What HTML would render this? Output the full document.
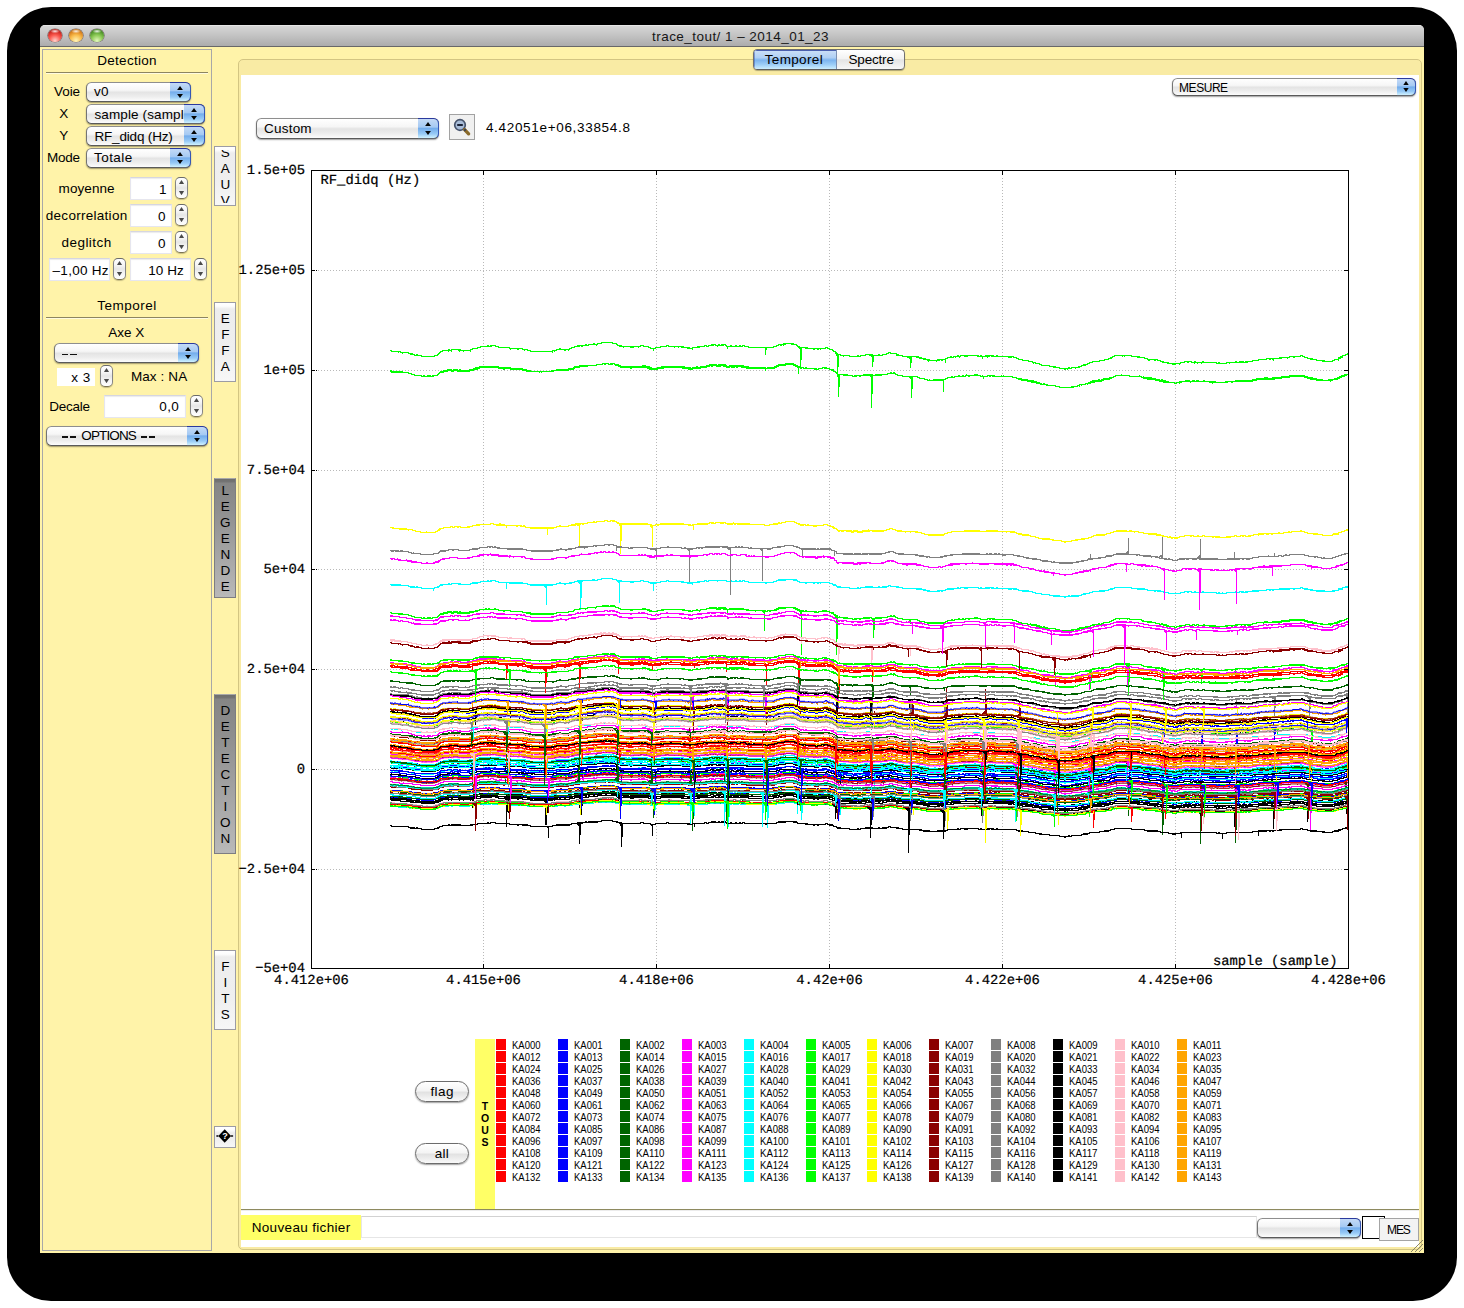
<!DOCTYPE html><html><head><meta charset="utf-8"><title>trace_tout</title><style>
*{box-sizing:border-box;margin:0;padding:0}
html,body{width:1464px;height:1308px;overflow:hidden;background:#fff}
body{position:relative;font-family:"Liberation Sans",sans-serif;font-size:13.5px;color:#000}
.abs{position:absolute}
#shadow{left:7px;top:7px;width:1450px;height:1294px;background:#000;border-radius:44px}
#win{left:40px;top:25px;width:1384px;height:1228px;background:linear-gradient(#cfcfcf 0,#cfcfcf 22px,#fff3a9 22px);border-radius:5px 5px 0 0;overflow:hidden}
#tbar{left:0;top:0;width:1384px;height:22px;background:linear-gradient(#d6d6d6 0%,#c4c4c4 45%,#acacac 100%);border-bottom:1px solid #686868;border-top:1px solid #e6e6e6}
.tl{width:14px;height:14px;border-radius:7px;top:4px}
.t{white-space:pre;line-height:16px;height:16px}
.cb{height:20px;border-radius:5.5px;background:linear-gradient(#ffffff 0%,#f6f6f6 40%,#e4e4e4 52%,#ededed 75%,#fcfcfc 100%);border:1px solid #747474;border-top-color:#8e8e8e;border-bottom-color:#5a5a5a;box-shadow:0 1px 1.5px rgba(0,0,0,.38)}
.cb .cap{position:absolute;right:-1px;top:-1px;bottom:-1px;width:21px;border-radius:0 5.5px 5.5px 0;border:1px solid #3557b6;border-left:none;border-top-color:#2b3a9e;border-bottom-color:#62666e;background:linear-gradient(#c4daf6 0%,#a6caf3 42%,#74adec 50%,#97caf6 78%,#d0f2ff 100%)}
.cb .cap:before,.cb .cap:after{content:"";position:absolute;left:50%;margin-left:-2.9px;width:5.8px;height:4px;background:#050505}
.cb .cap:before{top:3px;clip-path:polygon(50% 0,100% 100%,0 100%)}
.cb .cap:after{bottom:3px;clip-path:polygon(0 0,100% 0,50% 100%)}
.cb.sm .cap:before{top:2.1px;margin-left:-2.7px;width:5.4px;height:3.8px}
.cb.sm .cap:after{bottom:3.1px;margin-left:-2.7px;width:5.4px;height:3.8px}
.fld{background:#fff;border:1px solid #e6e6ee;border-top-color:#d6d6e0;box-shadow:inset 0 1px 1px rgba(0,0,0,.08)}
.stp{width:13px;height:22px;border-radius:5px;border:1px solid #858585;border-top-color:#6a6a6a;border-bottom-color:#7c7454;background:linear-gradient(#fff 0%,#f6f6f6 30%,#e6e6e6 50%,#f4f4f4 70%,#fff 100%);box-shadow:0 1px 1px rgba(0,0,0,.22)}
.stp:before,.stp:after{content:"";position:absolute;left:50%;margin-left:-2.6px;width:5.2px;height:4.2px;background:#4a4a4a}
.stp:before{top:1.9px;clip-path:polygon(50% 0,100% 100%,0 100%)}
.stp:after{bottom:2.8px;clip-path:polygon(0 0,100% 0,50% 100%)}
.vb{width:22px;border:1px solid #9c9ca4;background:linear-gradient(#ffffff 0,#fdfdfd 3px,#ededed 6px,#efefef 60%,#f7f7f7 100%);overflow:hidden}
.vbd{background:linear-gradient(#6e6e6e 0,#747474 3px,#858585 4px,#8e8e8e 25%,#b9b9b9 100%);border:1px solid #7d7d82;border-top-color:#a9a9a9}
.sep{height:2px;border-top:1px solid #8d8560;border-bottom:1px solid #fffbe0}
.pill{height:21px;border-radius:11px;border:1px solid #6c6c6c;background:linear-gradient(#fff 0%,#f4f4f4 45%,#e2e2e2 55%,#f9f9f9 100%);box-shadow:0 1px 1.5px rgba(0,0,0,.38)}
</style></head><body><div id="shadow" class="abs"></div><div id="win" class="abs"><div id="tbar" class="abs"></div><div class="abs tl" style="left:8.1px;top:3.9px;width:13.6px;height:13.6px;border-radius:7px;background:radial-gradient(ellipse 34% 16% at 50% 17%,rgba(255,255,255,.9) 0%,rgba(255,255,255,0) 100%),radial-gradient(circle at 50% 90%,#ffd2cc 0%,#fb5a50 42%,#d22d26 68%,#8a1a15 100%);box-shadow:0 0 0 .6px rgba(40,20,20,.55),0 1px 0 rgba(255,255,255,.35)"></div><div class="abs tl" style="left:29.1px;top:3.9px;width:13.6px;height:13.6px;border-radius:7px;background:radial-gradient(ellipse 34% 16% at 50% 17%,rgba(255,255,255,.9) 0%,rgba(255,255,255,0) 100%),radial-gradient(circle at 50% 90%,#fff5b8 0%,#f9bc4c 42%,#dc8622 68%,#9a5810 100%);box-shadow:0 0 0 .6px rgba(40,20,20,.55),0 1px 0 rgba(255,255,255,.35)"></div><div class="abs tl" style="left:50.2px;top:3.9px;width:13.6px;height:13.6px;border-radius:7px;background:radial-gradient(ellipse 34% 16% at 50% 17%,rgba(255,255,255,.9) 0%,rgba(255,255,255,0) 100%),radial-gradient(circle at 50% 90%,#e4f8bc 0%,#8cca56 42%,#559a2e 68%,#2f6216 100%);box-shadow:0 0 0 .6px rgba(40,20,20,.55),0 1px 0 rgba(255,255,255,.35)"></div><div class="abs t" style="left:612.05px;top:4.22px;font-size:13.5px;letter-spacing:0.454px;font-weight:normal;color:#161616">trace_tout/ 1 – 2014_01_23</div><div class="abs" style="left:2px;top:24px;width:170px;height:1202px;border:1px solid #a8a8a8"></div><div class="abs t" style="left:57.30px;top:27.72px;font-size:13.5px;letter-spacing:0.269px;font-weight:normal;">Detection</div><div class="abs sep" style="left:6px;top:47px;width:162px"></div><div class="abs t" style="left:14.00px;top:58.92px;font-size:13.5px;letter-spacing:-0.060px;font-weight:normal;">Voie</div><div class="abs cb" style="left:46px;top:57px;width:105px;height:20px"><span class="cap" style="width:21px"></span></div><div class="abs t" style="left:54.00px;top:59.42px;font-size:13.5px;letter-spacing:0.134px;font-weight:normal;">v0</div><div class="abs t" style="left:19.30px;top:80.82px;font-size:13.5px;letter-spacing:-1.016px;font-weight:normal;">X</div><div class="abs cb" style="left:46px;top:79px;width:119px;height:20px"><span class="cap" style="width:21px"></span></div><div class="abs t" style="left:54.40px;top:81.52px;font-size:13.5px;letter-spacing:0.127px;font-weight:normal;">sample (sampl</div><div class="abs t" style="left:19.30px;top:102.82px;font-size:13.5px;letter-spacing:-1.016px;font-weight:normal;">Y</div><div class="abs cb" style="left:46px;top:101px;width:119px;height:20px"><span class="cap" style="width:21px"></span></div><div class="abs t" style="left:54.40px;top:103.52px;font-size:13.5px;letter-spacing:-0.171px;font-weight:normal;">RF_didq (Hz)</div><div class="abs t" style="left:7.10px;top:124.82px;font-size:13.5px;letter-spacing:-0.260px;font-weight:normal;">Mode</div><div class="abs cb" style="left:46px;top:123px;width:105px;height:20px"><span class="cap" style="width:21px"></span></div><div class="abs t" style="left:54.00px;top:125.42px;font-size:13.5px;letter-spacing:0.454px;font-weight:normal;">Totale</div><div class="abs cb" style="left:144px;top:79px;width:21px;height:20px;border-radius:0 5.5px 5.5px 0;border-left:none;box-shadow:none;background:none"><span class="cap" style="width:21px"></span></div><div class="abs t" style="left:18.60px;top:155.52px;font-size:13.5px;letter-spacing:0.076px;font-weight:normal;">moyenne</div><div class="abs fld" style="left:90px;top:152px;width:42px;height:23px;"></div><div class="abs t" style="left:119.10px;top:156.52px;font-size:13.5px;letter-spacing:-1.316px;font-weight:normal;">1</div><div class="abs stp" style="left:135px;top:152px"></div><div class="abs t" style="left:5.80px;top:183.12px;font-size:13.5px;letter-spacing:0.279px;font-weight:normal;">decorrelation</div><div class="abs fld" style="left:90px;top:179px;width:42px;height:23px;"></div><div class="abs t" style="left:118.00px;top:183.52px;font-size:13.5px;letter-spacing:0.084px;font-weight:normal;">0</div><div class="abs stp" style="left:135px;top:179px"></div><div class="abs t" style="left:21.60px;top:210.02px;font-size:13.5px;letter-spacing:0.436px;font-weight:normal;">deglitch</div><div class="abs fld" style="left:90px;top:206px;width:42px;height:23px;"></div><div class="abs t" style="left:118.00px;top:210.52px;font-size:13.5px;letter-spacing:0.084px;font-weight:normal;">0</div><div class="abs stp" style="left:135px;top:206px"></div><div class="abs fld" style="left:9px;top:233px;width:61px;height:23px;"></div><div class="abs t" style="left:12.60px;top:237.52px;font-size:13.5px;letter-spacing:0.265px;font-weight:normal;">–1,00 Hz</div><div class="abs stp" style="left:73px;top:233px"></div><div class="abs fld" style="left:90px;top:233px;width:61px;height:23px;"></div><div class="abs t" style="left:108.20px;top:237.52px;font-size:13.5px;letter-spacing:0.105px;font-weight:normal;">10 Hz</div><div class="abs stp" style="left:154px;top:233px"></div><div class="abs t" style="left:57.25px;top:272.62px;font-size:13.5px;letter-spacing:0.481px;font-weight:normal;">Temporel</div><div class="abs sep" style="left:6px;top:292px;width:162px"></div><div class="abs t" style="left:68.20px;top:300.12px;font-size:13.5px;letter-spacing:0.042px;font-weight:normal;">Axe X</div><div class="abs cb" style="left:14px;top:318px;width:145px;height:20px"><span class="cap" style="width:21px"></span></div><div class="abs" style="left:22.3px;top:328.65px;width:6.2px;height:1.5px;background:#111"></div><div class="abs" style="left:30.4px;top:328.65px;width:6.2px;height:1.5px;background:#111"></div><div class="abs fld" style="left:17px;top:343px;width:38px;height:18px;border-color:#fff;box-shadow:none"></div><div class="abs t" style="left:31.20px;top:344.72px;font-size:13.5px;letter-spacing:0.492px;font-weight:normal;">x 3</div><div class="abs stp" style="left:60px;top:340px"></div><div class="abs t" style="left:90.90px;top:344.22px;font-size:13.5px;letter-spacing:0.112px;font-weight:normal;">Max : NA</div><div class="abs t" style="left:9.30px;top:373.92px;font-size:13.5px;letter-spacing:-0.266px;font-weight:normal;">Decale</div><div class="abs fld" style="left:64px;top:370px;width:82px;height:23px;"></div><div class="abs t" style="left:119.30px;top:374.22px;font-size:13.5px;letter-spacing:0.359px;font-weight:normal;">0,0</div><div class="abs stp" style="left:150px;top:370px"></div><div class="abs cb" style="left:6px;top:401px;width:162px;height:20px"><span class="cap" style="width:21px"></span></div><div class="abs" style="left:22.0px;top:411.35px;width:6.2px;height:1.5px;background:#111"></div><div class="abs" style="left:30.1px;top:411.35px;width:6.2px;height:1.5px;background:#111"></div><div class="abs t" style="left:41.30px;top:402.92px;font-size:13.5px;letter-spacing:-0.878px;font-weight:normal;">OPTIONS</div><div class="abs" style="left:101.0px;top:411.35px;width:6.2px;height:1.5px;background:#111"></div><div class="abs" style="left:109.1px;top:411.35px;width:6.2px;height:1.5px;background:#111"></div><div class="abs vb" style="left:174px;top:121px;height:60px"><div class="abs" style="left:0;top:3px;width:20px;height:53px;overflow:hidden"><div class="abs t" style="left:0;width:20.6px;text-align:center;top:-5.08px">S</div><div class="abs t" style="left:0;width:20.6px;text-align:center;top:10.82px">A</div><div class="abs t" style="left:0;width:20.6px;text-align:center;top:26.72px">U</div><div class="abs t" style="left:0;width:20.6px;text-align:center;top:42.62px">V</div></div></div><div class="abs vb" style="left:174px;top:277px;height:80px"><div class="abs" style="left:0;top:3px;width:20px;height:73px;overflow:hidden"><div class="abs t" style="left:0;width:20.6px;text-align:center;top:4.62px">E</div><div class="abs t" style="left:0;width:20.6px;text-align:center;top:20.62px">F</div><div class="abs t" style="left:0;width:20.6px;text-align:center;top:36.62px">F</div><div class="abs t" style="left:0;width:20.6px;text-align:center;top:52.62px">A</div></div></div><div class="abs vb vbd" style="left:174px;top:453px;height:120px"><div class="abs" style="left:0;top:3px;width:20px;height:113px;overflow:hidden"><div class="abs t" style="left:0;width:20.6px;text-align:center;top:0.82px">L</div><div class="abs t" style="left:0;width:20.6px;text-align:center;top:16.82px">E</div><div class="abs t" style="left:0;width:20.6px;text-align:center;top:32.82px">G</div><div class="abs t" style="left:0;width:20.6px;text-align:center;top:48.82px">E</div><div class="abs t" style="left:0;width:20.6px;text-align:center;top:64.82px">N</div><div class="abs t" style="left:0;width:20.6px;text-align:center;top:80.82px">D</div><div class="abs t" style="left:0;width:20.6px;text-align:center;top:96.82px">E</div></div></div><div class="abs vb vbd" style="left:174px;top:669px;height:160px"><div class="abs" style="left:0;top:3px;width:20px;height:153px;overflow:hidden"><div class="abs t" style="left:0;width:20.6px;text-align:center;top:5.12px">D</div><div class="abs t" style="left:0;width:20.6px;text-align:center;top:21.06px">E</div><div class="abs t" style="left:0;width:20.6px;text-align:center;top:37.00px">T</div><div class="abs t" style="left:0;width:20.6px;text-align:center;top:52.94px">E</div><div class="abs t" style="left:0;width:20.6px;text-align:center;top:68.88px">C</div><div class="abs t" style="left:0;width:20.6px;text-align:center;top:84.82px">T</div><div class="abs t" style="left:0;width:20.6px;text-align:center;top:100.76px">I</div><div class="abs t" style="left:0;width:20.6px;text-align:center;top:116.70px">O</div><div class="abs t" style="left:0;width:20.6px;text-align:center;top:132.64px">N</div></div></div><div class="abs vb" style="left:174px;top:925px;height:80px"><div class="abs" style="left:0;top:3px;width:20px;height:73px;overflow:hidden"><div class="abs t" style="left:0;width:20.6px;text-align:center;top:4.82px">F</div><div class="abs t" style="left:0;width:20.6px;text-align:center;top:20.82px">I</div><div class="abs t" style="left:0;width:20.6px;text-align:center;top:36.82px">T</div><div class="abs t" style="left:0;width:20.6px;text-align:center;top:52.82px">S</div></div></div><div class="abs vb" style="left:174px;top:1101px;height:22px"><svg width="20" height="20" viewBox="0 0 20 20"><path d="M9.7 2.3 L16.1 9 L9.7 15.7 L3.3 9Z" fill="#000"/><path d="M1.9 9h1M16.5 9h1" stroke="#000" stroke-width="1.5" stroke-linecap="round"/><text x="9.9" y="12.4" font-size="9" font-weight="bold" text-anchor="middle" fill="#fff" font-family="Liberation Sans">?</text></svg></div><div class="abs" style="left:198px;top:34px;width:1184px;height:1191px;border:1px solid #d3c582;border-radius:5px;background:#f9eba4"></div><div class="abs" id="white" style="left:201px;top:50px;width:1178px;height:1172px;background:#fff"></div><div class="abs" style="left:713px;top:24px;width:152px;height:21px;border-radius:4.5px;border:1px solid #707070;border-bottom-color:#5e5e5e;background:linear-gradient(#fff,#f3f3f3 45%,#e4e4e4 52%,#f7f7f7);box-shadow:0 1px 1px rgba(0,0,0,.3);overflow:hidden"><div class="abs" style="left:0;top:0;width:83px;height:19px;background:linear-gradient(#cde0f7 0%,#b0d0f4 40%,#7cb3ee 53%,#9ccdf7 76%,#ccedfe 100%);border-right:1px solid #7d90b2;box-shadow:inset 0 1px 0 #4a5fae, inset 1px 0 0 rgba(60,90,180,.5)"></div></div><div class="abs t" style="left:724.70px;top:27.12px;font-size:13.5px;letter-spacing:0.353px;font-weight:normal;">Temporel</div><div class="abs t" style="left:808.50px;top:27.12px;font-size:13.5px;letter-spacing:-0.189px;font-weight:normal;">Spectre</div><div class="abs cb sm" style="left:1132px;top:53px;width:244px;height:18px"><span class="cap" style="width:19px"></span></div><div class="abs t" style="left:1139.10px;top:55.04px;font-size:12px;letter-spacing:-0.469px;font-weight:normal;">MESURE</div><div class="abs cb" style="left:216px;top:93px;width:183px;height:21px"><span class="cap" style="width:21px"></span></div><div class="abs t" style="left:224.10px;top:96.12px;font-size:13.5px;letter-spacing:0.197px;font-weight:normal;">Custom</div><div class="abs" style="left:409px;top:89px;width:26px;height:26px;background:#f0f0f0;border:1px solid #a2a2a2"><svg width="24" height="24" viewBox="0 0 24 24"><circle cx="10" cy="10" r="5.3" fill="#a8bcd8" stroke="#46536c" stroke-width="1.7"/><path d="M7.2 10h5.6" stroke="#1a2238" stroke-width="1.8"/><path d="M14.6 14.6L18.6 18.8" stroke="#8a6a2a" stroke-width="3.4" stroke-linecap="round"/><path d="M14.4 14.4L15.6 15.6" stroke="#333d55" stroke-width="2.2"/></svg></div><div class="abs t" style="left:445.90px;top:95.12px;font-size:13.5px;letter-spacing:0.680px;font-weight:normal;">4.42051e+06,33854.8</div><svg class="abs" style="left:0;top:0" width="1384" height="1228" viewBox="40 25 1384 1228" shape-rendering="crispEdges"><defs><path id="b0" d="M390.5 0.5h1v1h7v1v-1h2v1h2v1v-1h6v1h2v1h1v-1h1v1h2v1h2v-1h1v1h1v-1v1h3v1h7v-1v1h6v-1v1v-1h3v-1h1v-1h1v-1h1v-1h2v-1h6v1v-1v-1h1v1h2v1v-1v-1h7v1h1v1v-1v-1h1v-1v1v1h3v1v-1h2v-1v1h5v1v-1v-1h2v-1h5v-1h3v-1h7v-1h1v1h2v-1v1v-1h1v1v-1h4v1h3v1h11v1h1v1v-1h7v1v-1v1h1v-1h4v1h2v1v-1h3v1h3v1h11v-1v1h11v1v-1v-1h2v1v-1h2v-1h3v-1h1v1h4v1h1v-1h3v1v-1h1v-1h2v-1h3v-1h3v-1h1v1h1v-1h2v-1v1v1h1v-1h3v-1h1v1h2v-1h4v-1v1h1v-1h1v1h2v1v-1h1v-1h4v-1h11v1h4v1h1v1h2v1h1v-1v1v-1h1v1h2v1v-1h7v1v-1v1h1v-1h1v1h1v-1h5v1v-1h2v-1v1v-1h3v1h3v-1v1h2v1h2v1h5v-1h5v-1h5v-1v1h1v-1h2v1h6v1v-1h4v1v-1h3v1h1v-1h1v1h4v1h1v-1h1v1v-1v1h3v-1h5v-1h1v1h1v-1v1v-1h5v-1h2v1h2v-1h3v-1h1v1h1v-1h2v1h2v1v-1h1v-1h1v1h2v-1h1v1h1v-1h2v1h1v1h1v1v-1h3v-1v1v-1h1v1h4v-1h1v1h3v-1h1v1h2v-1h2v1h4v1v-1v1h17v1h1v1v-1v-1h1v-1v1h6v-1h3v-1h2v-1v1v-1h2v1h1v-1h2v1v-1v-1h1v1h1v-1h5v-1v1h1v1v-1h1v1v-1h1v1h3v1h1v1h2v1h6v1h1v-1h1v1h6v1h1v-1h3v1h1v-1h2v1v-1h5v-1h2v1h2v1h3v1h1v1h2v1h1v1h1v1h3v1h3v1v-1h6v1h8v-1h1v1h2v-1h5v-1h7v1h2v-1v1h4v-1h1v1h3v-1h1v-1v1h3v-1h2v-1h2v1v-1v1h6v2h1v-1h1v1h4v1h5v1v-1h7v-1v1h2v1h1v-1h1v1h1v1h1v-1h1v1h2v1h1v-1h1v1h2v1h1v1v-1v-1h1v1v-1v1h7v1v-1h1v-1h1v1v-1v1h1v-1h2v1h1v-1h2v-1v1h1v-1h2v-1h3v-1h1v1h2v-1h2v1v-1h2v-1h1v1h1v1v-1h1v-1h4v1h1v-1h1v1h1v-1h10v1v-1h1v1h2v-1h1v1h4v-1h1v1h1v1v-1v-1h1v1h1v-1h2v-1v1v1h1v-1h1v1h1v-1v1h2v-1h1v1h11v1h1v-1h1v1h1v-1h2v1h3v1h2v1h4v1h6v1h4v1h1v1v-1h2v1h4v1h2v1h2v-1v1h6v1h1v-1v1h3v1h1v-1h1v1h4v1h5v1h1v-1h2v1v-1h1v-1h1v1h2v-1h4v1v-1h3v-1h1v1v-1h2v-1h1v-1v1h1v-1h1v1h1v-1h2v-1h2v-1h3v-1h7v-1h1v-1v1h4v-1h4v-1h2v-1h1v1v-1h1v-1h2v-1h8v1v-1h2v1v-1h1v-1v1h6v1h6v1h1v-1h1v1h5v1h3v1h1v1v-1h1v1v-1h3v-1v1h2v1h1v-1h2v1h3v1h2v1v-1h1v1h4v1v-1h1v1h4v1h1v-1v1v-1h1v1h1v-1h4v1v-1h1v-1h4v-1h3v1h1v-1h3v1h3v1v-1v-1h1v1h2v1v-1h4v1v-1h1v-1h1v1h13v1h2v-1h1v1h3v-1v1h4v-1h1v-1v1h2v1v-1h6v-1h1v-1v1v1h1v-1v1h2v-1v1v-1h1v1v-1h1v1h1v-1h1v1h2v-1h1v1h1v-1h5v-1h6v-1h1v-1v1h7v-1h3v1v-1v1h1v-1h2v1h1v1v-1v-1h6v-1h1v1h1v-1h6v1v-1h2v-1h4v1h1v-1h6v-1h2v1h2v1h3v1h3v1h1v-1h1v1h4v1h2v-1v1h4v1h1v-1h1v1h8v-1h2v-1h4v1v-1v-2h1v1h1v-2h1v1h1v-2h3v-1h2v-1h1" fill="none" stroke-linecap="square" stroke-linejoin="miter" vector-effect="non-scaling-stroke"/><path id="b1" d="M390.5 0.5h1v1h7v1h1v-1h1v1h1v-1h1v-1v1v1h6v1h3v1h2v-1v1h1v1h7v1h2v-1h1v1v-1v1h3v-1h1v1h1v-1h1v1h2v-1h1v1v-1h4v-1h1v-1h1v-1h1v-1h3v-1h4v-1h2v1v-1h2v1h2v-1h4v1h2v-1h1v1h9v-1h3v1v-1h1v-1h2v-1h1v1h1v-1h2v-1h6v-1h1v1h1v1v-1h1v-1h1v1h5v-1v1v-1h1v1h3v1h5v1h1v-1h1v1v-1h5v1h9v1v-1h3v1h1v1v-1h3v1h4v1h9v1v-1h2v1v-1h6v-1v1h4v-1h1v1h1v-1h3v-1h7v1v-1h5v-1h5v-1h1v-1h5v-1h6v1v-1h2v-1h8v1v-1h1v-1h6v-1h2v1h1v-1h2v1v-1h1v1h2v-1h1v1h1v-1h2v1h1v1h3v1h2v1v-1v1h10v1h1v-1h1v1v-1h10v-1h1v1h1v-1h1v1h2v1h1v-1v1v-1h1v2h1v-1h1v1h6v-1h4v-1h1v1h1v-1h19v1h1v-1h1v1h4v1h1v-1h1v1h2v-1h4v-1h1v1h2v1v-1h1v-1v1v-1h4v-1v1h2v-1h3v-1h2v1h1v-1h4v1h2v-1h1v1h1v1v-1v-1h3v1h1v-1h1v1h1v1h3v-1h1v-1v1h1v1h1v-1h1v1h1v-1h2v1h1v-1h1v1v-1h3v1h1v-1h1v1h3v1h1v-1h1v1h7v1v-1h8v1v-1h2v1h2v-1h2v1h1v-1h4v-1h2v-1h2v-1h7v-1h8v1h1v-1v1h1v1h2v1h2v1h1v1h1v-1h2v1v-1v1h2v-1h1v1h8v1h1v-1h1v1h2v-1h4v-1h2v1h1v-1h1v1h3v1h2v1h1v-1h1v2h2v1h1v1h1v1h2v-1v1h4v1h1v-1h1v1h1v-1h1v1h5v1h2v-1h1v1h1v-1h3v1h1v-1h3v-1h1v1h1v-1h1v1h1v-1h1v1h1v-1h2v1h4v-1h1v1h1v-1h1v1v-1v1h1v-1h1v1h1v-1h6v-1h3v-1h1v1h2v1v-1v-1h1v1h1v1v-1v1h2v1h5v1h7v1h1v-1h2v1v-1h5v1v-1v1h2v1h5v1h3v1h2v-1v1h4v-1v1h4v-1h1v1h1v1v-1h2v-1h1v1h1v-1h2v-1h2v-1h4v-1h1v1h2v-1h4v-1h1v1h3v-1h1v1h2v-1h1v-1v1h2v1h1v-1h3v1v-1h2v-1h1v1h1v-1h1v1h3v1h2v-1v1h5v-1h2v1h1v-1h2v1h1v-1h1v1h7v-1v1h2v-1v1h9v1v-1v1h4v1h2v1h3v1h6v1h1v1v-1h2v-1v1h1v1h1v-1v1v-1h1v1h1v1v-1h2v1h3v1h1v1v-1h1v1h1v-1v1h1v-1h1v1h2v1v-1h1v1h8v1h2v-1v1h2v1h12v-1h1v1h1v-1h2v-1v1h2v-1h2v1v-1v-1h2v1v-1h4v-1h2v1v-1h1v-1h2v-1h2v-1h1v1h1v-1h4v-1h1v1h2v-1h1v1v-1h1v-1h2v1v-1h4v-1h2v-1h2v-1h2v-1h4v1v-1h2v-1v1h6v1v-1h2v1h10v-1v1h2v1v-1v1h1v1v-1h1v-1v1v1h4v1h1v-1h1v1h1v-1h1v1h4v1h4v1h2v-1h1v1h1v1h1v-1h1v-1v1v1h1v-1v1v1h1v-1h1v1v-1v1h6v1h2v-1h3v1v-1v-1h1v1h1v-1h4v-1h4v1h1v1v-1h2v-1h2v1h2v-1h2v1h5v-1h1v1h4v-1v1h1v-1v1v1h1v-1v1v-1h1v1h1v1v-1v-1h1v1h1v-1h1v-1v1v1h10v-1h1v1h1v-1h4v1h1v-1h3v-1h1v1h1v-1h4v1v-1h2v-1v1h1v1h1v-1h2v1h1v-1h1v1h1v-1h2v-1h2v-1v1h2v-1h2v-1v1h5v1v-1h1v-1h1v1h1v-1h1v1h5v-1h1v1h1v-1h7v-1h8v-1h2v1v-1h9v-1v1h1v-1h1v1h2v1v-1v1h3v1h3v1h1v-1h1v1h4v1h4v1h1v-1h1v1h6v-1h1v1h1v1v-1v-1h1v1h1v-1h2v-1h3v-1h1v-1v1h1v-1h2v-1h1v1v-1h2v-1h2v-1h2" fill="none" stroke-linecap="square" stroke-linejoin="miter" vector-effect="non-scaling-stroke"/><path id="b2" d="M390.5 0.5h2v1h1v-1v1h6v1h4v-1v1h3v1h2v1v-1h4v1h3v1h5v1h6v-1v1h7v1v-1h2v-1h2v-1h1v1v-1v-1h1v1v-1v-1h1v-1h3v-1h7v-1h2v1h2v-1h3v1h1v-1h2v1h7v-1h1v1h1v-1v1v-1h3v-1h4v-1v1v-1h3v-1h9v1v-1h2v-1h3v1h3v1h3v-1h1v1h1v-1v1h3v1h5v-1v1h7v1h1v-1h2v-1v1h1v1v-1h1v1h2v-1h1v1h1v1h3v-1v1h2v1h9v1v-1h5v1v-1h7v-1h1v1h1v-1h3v-1h3v-1h1v1h3v-1v1h2v-1v1h3v-1h3v-1h4v-1h2v-1h1v1h2v-1v1v-1h2v1h1v-1h4v-1h6v-1h1v1h1v1v-1h1v-1h8v-1h3v1h2v-1v1h1v-1h2v1h1v-1h1v1h2v1h1v1h2v1h11v1h1v-1h4v-1v1h3v-1h1v1h2v-1h1v1h1v-1h1v1h3v1h2v-1v1h2v1h4v-1h2v1h1v-1h2v-1h6v-1h1v1h12v1h1v-1h1v1v-1h1v1v-1h1v1h5v1h1v-1h1v1h2v-1h5v-1h1v1h1v-1h1v1h1v-1h6v-1h2v-1h2v1h1v-1h1v1h2v-1h1v1v-1h3v1v-1h1v1h1v-1v1v-1h1v1h1v-1h2v1h2v2h1v-1h2v-1h1v1h1v1v-1v-1h1v-1v1h1v1h1v-1h2v1h3v-1h1v1h1v-1h1v1h5v-1v1h1v1h1v-1v1h14v1h5v-1h4v-1h4v-1h1v-1h1v1h2v-1h4v-1h9v-1v1v1h2v1h2v1v-1v1h1v1h1v1h1v-1v1v-1h1v1h1v-1h2v1h2v1v-1v-1h1v1h5v1h1v-1h1v1h1v-1h2v1v-1h5v-1h3v-1v1h1v1h1v-1v1h2v1h2v1h1v1h1v1h2v1h1v1h1v1h1v-1h2v1h1v-1v1h1v-1h3v1h5v1h1v1v-1h1v-1h4v1h5v-1h1v1v-1h2v-1h1v1h1v-1h1v-1v1v1h1v-1h3v1h8v-1h1v1h2v-1h3v-1h1v1v-1h2v-1h3v1h3v1h2v1h4v1h4v1v-1h1v-1v1h2v-1v1h1v-1v1h1v1v-1h5v1h1v-1h1v1v-1v1h4v1h1v1v-1h2v1h1v1v-1h3v1h7v1v-1h6v-1v1h2v-1h1v-1v1v-1h3v-1h4v-1h1v-1v1h12v-1h13v1v-1h2v1h7v-1h5v1h1v-1h1v1h1v-1h1v1h1v-1h1v1h9v1v-1h4v1h1v-1h1v1h1v-1h1v1h2v1v-1v1h2v1v-1v1h1v-1h1v1h1v-1v1h1v1h6v1h2v-1v1v1h5v1h3v1v-1v1h4v1h1v-1h1v1h3v1h1v-1h1v1h3v1v-1h1v1h8v1v-1v1h1v1v-1h2v1h1v-1h6v-1h4v-1h1v1h1v-1h4v-1h3v-1h4v-1h3v-1h2v-1h3v-1h1v1h1v-1h3v1v-1h1v-1h1v1h1v1v-1v-1h2v-1h4v-1h1v-1v1h2v-1h3v-1v1v-1h4v-1v1h2v1v-1h1v1v-1h3v1h3v-1h2v1h3v1v-1h4v1h5v1h5v1h2v1v-1h6v1v-1v1h4v1h2v1v-1h1v1h4v1h2v-1h1v1h1v1h1v-1h1v1v-1h1v1v-1v1h3v-1h2v-1h5v-1h3v-1v1h3v1h1v-1h2v1h4v-1v1v-1h1v1h4v-1h2v1h5v1v-1h2v-1v1h1v1h1v-1h2v1h1v-1h1v1h1v-1h1v1h7v-1h1v1h1v-1h1v1h1v-1v1v-1h4v-1h2v1h4v-1h2v-1v1v1h1v1v-1v-1h2v1h1v1v-1h2v-1h1v1h1v-1h1v1v-1h2v-1h2v-1v1h3v1v-1v-1h5v-1h3v1h2v-1h3v1h1v-1h6v-1h1v1h4v-1h5v1v-1v-1h1v1h2v-1v1v-1h2v1v-1h1v1v-1h6v-1h1v1h3v1h3v1v-1v1h2v1v-1h1v1v-1h3v1h2v-1v1h2v1h5v1h7v1v-1h3v-1h1v-1h3v-1h1v1h1v-2h1v1v-1h2v-1h3v-1h2v-1v1v-1h2" fill="none" stroke-linecap="square" stroke-linejoin="miter" vector-effect="non-scaling-stroke"/><path id="b3" d="M390.5 0.5h1v1h2v-1h2v1h3v1h2v-1h2v1h2v-1v1h4v1h3v1h2v-1v1h1v1h3v-1v1h3v1h13v-1h3v-1h1v1v-1h1v-1h1v-1h1v-1h1v-1v1h1v-1h1v1h2v-1h3v-1v1v-1h4v1h1v-1h4v-1v1h1v1h7v-1v1h4v-1h1v-1v1h2v-1v1v-1h5v1v-1v-1h2v-1h7v1v-1h1v-1h2v1h1v-1h2v1h2v-1h1v-1v1v1h1v1v-1h1v1h1v-1h1v1h8v1h2v-1h1v1h5v1h1v-1h1v-1v1h5v1h4v1h5v1h4v1v-1h16v-1v1h1v-1h4v1v-1v-1h1v1h1v1v-1v-1h2v-1h1v1h2v1v-1h2v1h1v-1v1v-1h1v1v-1h1v-1h3v-1h4v-1h1v-1v1h2v-1h2v1v-1h7v-1v1v-1h6v-1h2v1h1v-1h8v-1h4v1h1v-1h4v1h3v1h1v1h2v1h1v-1h1v1v-1v1h6v1v-1h1v1h2v-1h1v1h1v-1h10v1v-1h1v1v-1h4v1h3v1v-1v1h4v1v-1h1v-1h1v1v-1h4v-1h3v1v-1h3v-1v1h1v-1h1v1h13v1h3v-1h1v1h3v-1v1h1v1h1v-1h1v1h1v-1h2v1v-1h2v-1h2v1h1v-1h1v-1v1h1v1h1v-1h3v-1h1v-1v1v1h1v-1h3v-1h1v1h3v-1h1v1h1v1v-1h1v-1h1v1h1v-1h1v-1v1h2v1h2v-1h1v1h2v2h1v-1h2v1v-1h5v-1h1v1h1v1v-1h1v-1h1v1h2v-1v1v-1h1v1h2v1v-1h4v1h2v-1h1v1h15v-1v1h1v1h1v-1h1v1h1v-1h2v-1h1v1v-1h1v1v-1h3v-1h3v-1h3v-1v1h1v-1h5v-1v1h3v1v-1h1v1h3v1h1v1h2v1v-1v1h2v1v-1h1v1h2v-1h1v1h1v-1v1h5v1v-1h4v1h2v-1h1v1h2v-1h1v1v-1h3v-1h1v1h1v-1v1v-1h1v1h3v1h1v1h3v1h1v1h1v2h2v1v-1h1v1v-1h4v1h9v1h2v-1h1v1h1v-1h2v1h1v-1h1v1h2v-1h1v1v-1h2v-1h1v1h1v-1h2v1h1v-1h1v1h6v1v-1h2v-1h1v1h1v-1h4v-1h3v-1h1v1v-1h3v-1v1h1v1h2v1h3v1h3v1h1v-1h1v1v-1v1h11v1v-1h1v1h1v1v-1v-1h1v1h2v1h4v1v-1v1h1v-1v1h2v1h1v-1h1v1v-1h1v1h9v-1v1h2v-1h1v1h1v-1h1v-1v1h1v-1h1v1h1v-2h4v-1h1v1h1v-1h10v-1v1v-1h17v1h6v-1v1h1v-1h1v1h2v-1h2v1h3v-1h1v-1v1h1v1h2v-1v1v-1h1v1h3v1h1v-1h1v1h1v-1h1v1v-1h1v-1v1h2v1v-1h4v1h4v1h2v1v-1v1h1v-1v1h1v-1v1h2v1h3v1h1v-1h1v1h4v1h4v1h3v-1v1h1v1v-1v1h2v1h5v1h4v1h2v-1h1v1h5v1h1v-1h1v1h3v1h1v-1h3v-1h1v-1v1v1h3v-1v1v-1h3v-1v1h1v-1h1v1h1v-1h3v-1h2v-1h4v-1h1v-1h1v1h1v-1h2v-1h6v-1h1v1h1v-1h5v-1h1v-1h5v-1h2v-1h3v-1h1v-1v1h4v-1v1h4v1h3v1v-1h8v1h1v1v-1v-1h2v1h4v1h6v1v-1h1v1h1v1v-1h4v1h1v-1h1v1h2v1h5v1h2v1v-1v1h2v-1h1v1h3v1h5v-1h2v-1h1v1h1v-1h3v1v-1v-1h2v1h2v-1h4v1h4v-1h3v1h14v1h1v-1h1v1h1v-1h1v1v-1v1h10v-1v1v-1h1v1h1v-1h2v1h1v-1h7v-1h3v1h1v-1h3v1h3v-1h3v-1h6v-1h5v-1h1v1h1v-1h1v1h1v-1h1v-1v1h1v1h1v-1h8v-1h3v1h2v-1h2v-1h1v1h3v-1h1v1v-1h7v1v-1h7v1h1v1v-1h3v1h2v1h4v1h1v-1h2v1h4v1h2v-1h1v1h3v1v-1h5v-1h3v-1h2v-1h1v-1h1v-1v1h2v-1v1v-1h3v-1h1v-1h1v-1v1h2v-1v1" fill="none" stroke-linecap="square" stroke-linejoin="miter" vector-effect="non-scaling-stroke"/><path id="b4" d="M390.5 0.5h1v1h1v-1h2v1h3v-1v1h1v1h1v-1h1v1h1v1v-1h5v-1v1h1v1h4v1h5v1h3v-1v1h2v1h5v1v-1v-1h1v1h1v-1v1h5v-1h1v1v-1h1v-1h1v1v-1h2v-1h1v-1h1v-1h2v-1h1v1h1v-1h5v-1h3v1v-1h5v1h10v-1h1v1h1v-1h3v-1h5v-1h2v-1h1v-1v1h3v-1v1v-1h4v1h1v1v-1v-1h2v-1v1h1v1h1v-1h1v1h1v-1h1v1h2v1v-1h1v1v-1v1h3v1v-1h3v1v-1h3v1h2v1v-1v-1h1v1h1v-1v1h2v1v-1h8v1h1v-1h2v1h1v1h3v1v-1h2v1v-1v1h1v-1v1v-1h1v1v-1v1h7v1v-1h12v-1h1v1h1v-1h3v-1h9v1h1v-1h2v-1h3v-1h3v-1h4v1v-1h1v-1h2v-1v1h1v1v-1h1v1v-1h5v-1h1v1h1v-1h4v-1h2v1h1v-1h3v-1h1v1h2v-1h2v1h1v-1v1h2v-1h1v1h1v-1v1h2v-1h1v1h3v1h2v1h1v1h2v1v-1h2v1v-1h8v1v-1h7v-1h1v1h2v-1h1v1h2v-1h1v1h1v1v-1h1v1h2v1h1v-1h1v1h3v-1h6v-1h1v1h2v-1v1v-1h3v-1v1h1v-1v1h2v1v-1h1v-1h1v1h1v-1v1h2v1v-1h6v1v-1v1h1v1v-1h2v-1h1v1h2v-1v1h3v1h1v-1h4v1v-1h3v-1h6v-1h3v1v-1v1h1v-1h2v-1h3v1h2v-1h2v1h1v-1h1v-1v1h1v1h2v-1h1v1v-1h3v1h1v-1v1h1v1h3v-1h1v1h1v-1h4v1h1v1v-1h3v-1h5v1h1v-1v1v1h2v-1h1v1h2v-1v1h2v-1h1v1h2v1v-1h4v1v-1h5v1h3v-1h3v1v-1h3v1v-1v-1h3v-1h3v-1h4v-1h1v-1v1h5v1v-1h4v1h2v1h1v1h2v1h3v1v-1v1h1v-1h2v1h1v1v-1h9v1h2v-1h4v-1h2v-1v1v1h1v-1h3v1h3v1h3v1h1v2h2v2h1v1h1v1v-1v-1h4v1h2v-1h1v1h3v-1v1h3v-1v1h1v1v-1h1v1h4v1v-1v-1h2v1h1v-1h6v1v-1v-1h3v1h1v-1v1h11v-1v1v-1h1v1h1v1v-1v-1h2v-1h2v-1h1v1h1v-1h1v1v-1h1v1h1v-1h1v1h2v1h2v1v-1v1h5v1h4v1h1v-1h2v1v-1h7v1h4v1h3v1h4v-1v1h1v1v-1v1h2v1v-1h8v-1h2v1h2v-1h3v-1h3v-1h2v-1h1v1h1v1v-1v-1h6v-1v1h1v-1h6v1h1v-1h6v-1v1h7v1h3v1v-1h6v-1h6v1h8v1v-1h4v1v-1v1h1v-1h3v1h1v-1h2v1h2v-1v1h1v1h3v1h2v1v-1v1h7v1h2v1h1v-1h2v1h2v1h4v1v-1v1h2v1h2v-1h1v1h1v1h1v-1h2v1h3v1v-1h1v1h1v-1h1v1h4v1v-1h1v1h5v1h1v-1h7v-1h3v-1h1v1h1v-1h2v-1h1v1v-1v1h1v-1h2v-1h5v1v-1v-1h1v1v-1h1v-1h2v1v-1v-1h1v1h1v-1h4v-1h8v-1h2v-1h2v-1h1v1v-1h2v-1h1v-1h1v1h1v1v-1v-1h3v1v-1h8v1h1v1v-1h1v1v-1h1v-1h3v1h4v1h1v-1h1v1h2v1h1v-1h2v1v-1h1v1h4v1h2v-1v1v-1h1v1h5v1v-1v1h3v1v-1v1h1v1v-1h3v1h4v1h4v1h1v-1v1v-1h1v1h2v-1h5v1v-1v-1h1v-1h3v1h1v-1h2v1h1v-1h1v1h1v-1h4v1h3v-1h3v-1v1v1h9v1h1v-1h1v1h2v-1h2v1h1v1v-1v-1h1v1h5v-1v1h6v-1h2v1h1v-1h3v-1h1v1h1v-1h1v1h1v-1h4v1h1v-1h2v1v-1h1v1v-1h2v1h1v-1h2v-1h1v1v-1h5v-1v1v-1h1v1v-1h4v-1h1v1h5v-1h1v1h1v-1h6v-1h1v1h1v-1h1v1h1v-1h9v-1h7v1v-1h8v1h1v1v-1h1v1v-1v1h2v1v-1h2v1h2v-1v1h2v1h1v-1h1v1h4v1h10v-1h4v-1h1v-1h2v-1v1v-1h2v-1h1v1h1v-1h2v-1h2v-1h2v1v-1" fill="none" stroke-linecap="square" stroke-linejoin="miter" vector-effect="non-scaling-stroke"/><path id="b5" d="M390.5 0.5h1v-1v1v1h1v-1v1h1v1v-1v-1h1v1h3v-1v1h1v1v-1v1h1v-1h1v1h1v1v-1h4v1v-1h1v1h3v1h1v-1h1v1h2v1v-1h2v1h4v1h3v1v-1h6v1v-1h7v-1h2v-1h1v-1h1v-1h1v-1h2v-1h5v-1v1h1v-1h3v1h1v-1h6v1v-1h1v1h10v-1h3v-1h4v-1h4v-1v1h1v-1h9v-1h1v1v-1h1v1h5v1v-1v1h2v1v-1h7v1h1v-1h1v-1v1h1v1v-1h1v1h3v1v-1h5v1h1v1v-1v-1h1v-1v1h1v1h1v-1h1v1h4v1h1v-1v1h3v1h1v-1h2v1h5v1v-1h3v-1v1h4v1v-1h6v1v-1h1v-1h4v-1h7v1h1v-1h4v-1h3v-1h2v-1h2v1v-1h1v-1h1v1h2v-1h6v-1h2v1h1v-1v1v-1h4v-1h6v-1h1v1h1v-1v1v-1h4v1h1v-1h3v-1v1h2v1h2v-1h1v1h1v1h3v1h2v1h1v-1h2v1h3v1h1v-1h1v1h2v-1h3v1v-1h7v-1h1v1h6v1h1v-1h1v1h1v1h6v1v-1v-1h5v-1h2v-1v1h6v-1h1v1h1v1v-1h3v1v-1h4v1h1v-1h1v1v-1v1h1v-1h3v1h1v1v-1h2v1h1v1v-1v-1h1v1h1v1v-1h1v-1h5v-1h9v-1h1v1h1v-1h2v1v-1h1v-1h2v1v-1h1v1h3v-1h1v-1v1v1h1v-1h1v1v-1v1h1v1v-1v-1h3v1h3v1h1v1h1v-1h2v1v-1h1v-1h2v1h1v-1v1h2v-1h1v1h1v-1h2v1h2v-1h1v1h5v1h3v-1h1v1h12v1h1v1v-1h1v-1h1v1v-1v1h1v-1h4v-1h1v1h1v-1h2v-1h3v-1h5v-1h10v1h2v1h2v1h1v1h4v1h1v-1h3v1h4v1h1v-1h4v1h1v1v-1v-1h6v-1v1h3v-1h2v1v-1v1h3v1h1v-1v1v1h2v1h1v1h1v1h1v1h2v1v-1h2v1h2v-1h1v1h1v1v-1h4v1h1v-1v1v-1h1v1h1v-1h1v1h1v-1h1v1h1v-1h2v1h1v-1h1v1h1v-1h4v-1h1v1v-1h2v1h2v-1h1v1h5v1v-1v-1h1v1v-1v1h2v-1h1v1v-1h2v1h1v-1h2v-1h2v-1h1v1h1v-1h2v1h4v1h2v1h4v1v-1h1v1h3v1v-1h1v1h1v-1h8v1h1v-1h1v1h2v-1v1v1h4v1h1v-1h1v1h1v1v-1h1v1h7v1v-1h9v-1h1v-1v1h1v-1h2v-1h4v-1h1v1v-1v1h1v-1h1v-1v1h1v1v-1h3v-1h1v1h1v-1h4v1v-1h11v-1h1v1h1v1v-1h1v1h9v-1h6v1h1v-1h1v1h9v1h1v-1h6v-1v1h2v1h2v1h2v1h1v-1h1v1h2v1v-1v1h1v-1h2v1h1v1h1v-1h1v1h6v1h1v1h1v-1h1v1h2v1h4v1h6v1h1v-1h1v1h2v1v-1h1v1h1v-1h1v1h4v1h3v1v-1h2v1h1v-1h4v-1h2v1h1v-1h3v-1h1v-1v1v1h2v-1h2v1v-1h1v-1h2v-1h4v-1h2v1v-1v-1h4v-1h4v-1h1v1h1v-1h1v1h1v-1h2v1v-1v-1h6v-1h1v-1h4v-1v1v-2h3v1v-1h1v1v-1h11v1h1v-1h1v1h8v1h1v-1v1h3v1h6v1h7v1h1v-1h1v1h2v1h3v1h6v1h3v1v-1h1v1h3v1v-1v-1h3v-1h1v1h1v-1h2v1v-1v-1h1v1v-1h6v1h2v-1h2v1h1v-1h1v1h2v-1h1v1h1v-1h1v1h1v-1v1v-1h1v1h4v1v-1h3v-1v1h4v1h11v-1h3v1v-1v1h1v1v-1v-1h2v1v-1h3v-1v1h3v-1h1v1h1v-1h1v1h2v-1h4v-1v1v1h2v-1h4v-1h2v1v-1h4v-1h4v-1h1v1h1v-1h1v-1v1v1h2v-1h4v1h1v-1h1v-1v1h5v1v-1h2v-1h10v1v-1v-1h1v-1v1v1h1v-1h2v-1v1h4v-1h1v1h1v-1h2v1h1v1h3v1h6v1v-1v1h4v1h2v1v-1h3v-1v1h1v1h1v-1h1v1h1v1v-1h7v-1v1v-1h2v-1h3v-1h2v-1h1v-1h3v-1h3v-1h2" fill="none" stroke-linecap="square" stroke-linejoin="miter" vector-effect="non-scaling-stroke"/><path id="b6" d="M390.5 0.5v1h1v-1h1v1h1v1v-1h1v-1h1v1h3v1h1v-1h1v-1v1v1h6v1v-1h2v-1v1v1h3v1h1v1v-1h3v1h1v-1h1v1h2v-1v1h1v1h7v1v-1h2v-1v1h4v-1h1v-1v1v1h1v-1h2v-1h1v-1h1v-1h1v-1h2v-1v1v-1h3v1v-1h3v-1h1v1v-1h1v1h1v-1h6v-1v1v1h11v1v-1v-1h1v1h1v1v-1v-1h2v-1h2v-1v1h2v-1h3v-1h2v-1v1v1h1v-1h2v-1h1v1h1v-1h2v1v-1v1h9v1h1v-1h1v1h8v1h1v-1h1v1v-1v1h1v1v-1h8v1h1v-1h2v1v-1v1h1v-1h1v1h2v1h4v1h4v-1h1v1h3v1v-1h4v1v-1h6v1v-1h3v-1h2v1h2v-1h2v-1h4v-1h1v1h4v1h1v-1h3v-1h2v-1h5v-1h1v-1h2v1h1v-1h1v1h1v-1h4v-1h6v-1h10v-1h4v1v-1h5v1h1v-1h1v1h2v1h2v1h3v1h1v-1h1v1h3v1v-1h1v1v-1h15v-1h2v1h4v1h4v1h4v-1h1v1h1v-1h4v-1h7v-1h1v1h4v1v-1h5v1v-1h4v1h5v1h1v-1h2v1h2v-1v1h1v-1h4v-1h1v1v-1v1h1v-1h6v1v-1v-1h2v-1v1v1h1v-1h1v-1v1h2v-1h3v1v-1h1v1h4v-1h1v1v-1h1v1h1v1v-1v-1h1v-1v1h1v1h2v1h2v1v-1h11v-1h3v1v-1h2v1h1v1v-1h2v1h1v1v-1h3v-1h2v1h6v1v-1h7v1h1v-1h6v1v-1h1v-1h2v-1h3v-1h4v-1h7v-1v1h3v1v-1h1v1h1v1v-1h1v1h2v1h1v1h1v1h1v-1h1v1h1v-1h1v1h4v-1v1h3v1h1v-1h1v1h1v-1h2v1h1v-1h5v1v-1h2v-1h1v-1v1h1v-1v1h1v1v-1v1h1v1v-1h1v1h4v1v-1v2h1v1h1v1h2v1h1v1h2v-1v1v-1h3v1h1v1v-1h1v-1h1v1h5v1h1v-1h1v1h3v-1h1v1h3v-1h5v1v-1v-1h2v1h10v-1h1v1h1v-1h1v1h2v-1h1v1h1v-1h3v-1h1v-1h5v1h2v1h2v1h2v1v-1h2v1h3v-1v1h2v1v-1h1v1v-1h4v-1v1h4v1h1v-1h1v1h4v1v-1v1h1v1h1v-1h1v1h2v1h10v1v-1h6v-1v1h1v-1h2v-1h1v-1h3v1v-1h1v-1h1v1h2v-1h7v-1h5v1v-1h1v-1v1h2v1h1v-1h2v1v-1h1v-1v1h4v-1h1v1h2v1h8v-1h1v1h1v1v-1v-1h2v-1v1h1v1h1v-1h2v1h3v1v-1h10v1h1v-1h3v1h3v1v-1h2v1h2v1h2v1h1v-1h1v1v-1v1h4v-1v1v1h5v1h4v1h3v1h3v1h4v1h3v-1v1h2v1h2v-1h1v1h6v1h7v-1v1h2v-1h1v1h2v-1h4v-1h5v-1h2v1v-1h2v-1h1v-1h1v1v-1h1v1v-1h2v-1h2v-1h5v1v-1v-1h1v1h1v-1h1v1h1v-1h4v-1h2v-1h1v1h1v-1h1v1v-1h1v-1h1v-1h2v-1h6v1v-1h6v1h1v-1h2v1h1v-1h2v1h1v-1v1h2v-1v1h4v1h3v1h1v-1v1v-1h1v-1v1h1v1h1v-1v1h4v1h5v1h1v-1h1v-1v1v1h2v1h3v1v-1h2v1h4v1h3v1v-1h1v1h3v1v-1h1v-1h2v1v-1h3v-1h2v-1v1v-1h1v-1v1h4v1v-1h3v1h1v-1h2v1h1v1v-1v-1h3v1v-1h1v1h1v-1h1v1v-1v1h1v1v-1v-1h1v1v-1v1h8v1h1v-1h3v1h1v-1h1v1h2v-1v1v-1h1v1h2v1v-1h1v1v-1h1v-1v1h1v-1h1v1h1v-1h1v1h3v-1h4v-1h1v1h1v1v-1v-1h1v1h2v-1h1v-1v1v1h2v-1h2v1h1v-1h2v1h1v-1h1v-1v1h2v1v-1h2v-1h3v1v-1v-1h1v1h1v1v-1v-1h2v-1v1h4v-1h1v1h2v-1h5v-1v1h1v-1v1h6v-1h1v1h2v-1h9v-1h7v-1h2v1h1v1v-1h1v1h4v1h1v1v-1h1v1h8v1h2v-1v1h1v1v-1v1h1v-1h1v1h3v-1h1v1v-1v1h1v-1h1v1h4v-1h1v-1h3v-1h2v-1h4v-1h2v-1h1v-1v1h1v-1h1v-1h1" fill="none" stroke-linecap="square" stroke-linejoin="miter" vector-effect="non-scaling-stroke"/><path id="b7" d="M390.5 0.5h1v1h4v-1v1h1v1h2v-1h1v1h1v-1v1h6v1h2v1v-1h4v1h3v1v-1h1v1h6v1h12v1v-1h1v-1h1v-1v1h1v-1h1v-1h1v-1h2v-1h2v-1h5v-1h1v-1v1v1h1v-1h1v1h2v-1h6v1h3v1v-1h7v-1h5v-1h2v-1h2v-1h2v1v-1h4v-1h2v1v-1v1h3v1v-1h1v-1h1v1h1v-1h2v1h4v1h1v-1h1v1h4v1h2v-1h1v1h1v1v-1h1v-1h1v1v-1v1h7v1v-1h1v1h1v-1h4v1h2v1h2v1v-1h2v1h3v-1v1h16v-1v1h3v1v-1v-1h2v1h1v-1h1v-1h6v-1v1h8v1v-1v-1h2v-1h3v1v-1v-1h2v-1h2v1h2v-1h5v1v-1v-1h1v1h1v1v-1v-1h8v-1h4v1v-1h1v1v-1h2v-1h1v1h1v-1h1v1v-1h1v1v-1h2v1v-1h2v1h1v-1h2v1h1v-1v1h2v1h1v1h4v1h4v1v-1h1v1h2v-1h1v1h1v1v-1h1v-1h7v1v-1h1v-1h2v1h2v-1v1h4v-1v1v1h2v1v-1h1v1h1v-1h1v2h1v-1h2v-1h1v-1v1h4v-1v1h1v-1h1v1h1v-1h5v-1h1v1h9v-1v1h2v1v-1h3v1h3v1v-1h3v1h1v-1h6v-1h1v1h1v-1h2v1h2v-1h3v-1h1v1h1v-1h4v-1h2v1h1v-1h4v1h1v-1h1v1h1v1v-1v-1h2v1h1v-1h1v1h1v1h1v1v-1v1h1v-1h1v-1v1h4v-1h2v1h2v-1v1h3v-1h3v1h1v-1h1v1h2v1h19v1h1v-1h2v1h1v-1h2v-1h1v1h1v-1h2v-1h4v-1h3v-1h6v1v-1h5v1h1v1h1v-1h1v1h1v1h1v1h4v1h2v-1h3v1h4v1v-1h3v1h2v-1h6v-1h4v1h3v1h2v1h1v1h1v1h2v-1v1v1h1v2h2v-1v1v-1h2v1h1v-1h1v1v-1v1h1v-1h1v1h2v-1v1h2v-1v1h2v1h1v-1h2v1h1v-1h1v1h4v-1h1v1h1v-1h1v1v-1h1v-1h3v1h2v-1h2v-1v1v1h9v-1h1v1h1v-1h3v-1h4v-1h1v-1v1v1h1v-1h1v1h3v1h2v1h4v1v-1h2v1h3v1h1v-1h2v1h1v-1h3v1h1v-1h4v1h1v1h4v1h1v-1h1v1h3v1h6v-1h1v1h1v1v-1h7v-1h2v-1v1v-1h1v-1h3v1v-1h2v1v-1v-1h4v1v-1h6v-1v1h2v-1h4v1h1v-1h6v-1h1v1h4v1h1v-1h1v1h7v-1h4v1h2v-1h1v1h1v1v-1h11v1v-1h1v1h1v-1h1v-1v1h3v-1v1v1h1v1v-1h2v1v-1v1h2v1v-1v1h4v1h6v1h1v-1v1h2v1h4v1h3v1h3v1h1v-1h1v1h3v1h3v-1v1v-1h1v1h3v1h1v-1h1v1h2v1v-1h1v-1v1h1v1h2v-1h1v1h2v1h1v1v-1v-1h4v-1h1v1h1v1v-1v-1h6v-1h3v-1h4v-1v1h1v-1h2v-1h4v-2h5v-1h1v1h3v-1h1v1v-1h5v-1h2v-1h2v-1h2v1v-1h1v-1h2v-1h12v1h1v1v-1h1v1v-1v-1h1v-1v1v1h6v1h1v-1h1v1h1v-1h2v1h2v1h8v1h3v1v-1h2v1h1v-1v1v-1h1v1h2v1h2v1h1v-1h1v1v-1v1h4v-1v1v1h2v1v-1h3v1h2v-1h1v1h1v-1h1v-1h2v1h1v1v-1v-1h3v-1h4v1h1v1v-1h1v-1h5v1h1v-1h1v1h1v-1h5v1h4v1v-1h3v1h1v1v-1v-1h1v1h2v-1h2v1h1v-1h1v1h8v-1h1v1h1v-1h7v-1h1v1h3v-1h3v1h1v-1h2v1v-1h1v1h1v-1h1v1h1v-1h1v1h1v-1h1v-1h2v1h1v-1h1v1v-1v-1h2v1h1v-1h6v1v-1h2v-1h1v1h2v1v-1h1v-1h7v-1h4v1h1v-1h4v-1v1v-1h1v1h2v-1v1v-1h1v-1v1h1v1h1v-1h5v1v-1h2v-1h1v1h2v1h3v1h2v1v-1h3v1h3v1h7v1h9v-1h1v1h1v-1h2v-1h3v-1h2v-1h2v-1h3v-1h1v-1h1v-1v1h2" fill="none" stroke-linecap="square" stroke-linejoin="miter" vector-effect="non-scaling-stroke"/></defs><path d="M318 270.5H1348M318 370.5H1348M318 470.5H1348M318 569.5H1348M318 669.5H1348M318 769.5H1348M318 869.5H1348M483.5 178V968M656.5 178V968M829.5 178V968M1002.5 178V968M1175.5 178V968" stroke="#b9b9b9" stroke-width="1" stroke-dasharray="1 2" fill="none"/><use href="#b7" transform="matrix(1 0.00035 0 0.685 0 766.94)" stroke="#006400" stroke-width="1.0"/><use href="#b2" transform="matrix(1 0.00032 0 0.674 0 777.53)" stroke="#ff00ff" stroke-width="1.0"/><path d="M871.5 781v3M909.5 782v14M910.5 782v8M908.5 782v2M907.5 782v1M906.5 782v1M943.5 784v26M944.5 784v15M942.5 784v3M941.5 784v2M940.5 784v1M982.5 782v30M983.5 782v18M981.5 782v3M980.5 782v2M979.5 781v1M1016.5 783v35M1017.5 783v21M1015.5 783v3M1014.5 782v2M1013.5 782v1M1055.5 789v22M1056.5 789v13M1054.5 789v3M1053.5 789v2M1052.5 789v1M1089.5 787v6" stroke="#ff00ff" stroke-width="1" fill="none"/><use href="#b3" transform="matrix(1 -0.00002 0 0.706 0 764.90)" stroke="#ff00ff" stroke-width="1.0"/><path d="M763.5 763v8M798.5 762v15M799.5 762v9M797.5 761v2M796.5 761v1M795.5 761v1M836.5 767v27M837.5 767v16M835.5 766v3M834.5 765v2M833.5 765v1M871.5 768v21M872.5 768v12M870.5 768v3M869.5 768v2M868.5 768v1M909.5 769v8M943.5 772v2" stroke="#ff00ff" stroke-width="1" fill="none"/><use href="#b0" transform="matrix(1 0.00162 0 0.635 0 756.37)" stroke="#8b0000" stroke-width="1.0"/><path d="M1127.5 762v9M1126.5 762v2M1125.5 761v1M1124.5 761v1M1162.5 765v27M1163.5 765v16M1161.5 765v3M1160.5 765v2M1159.5 765v1M1200.5 766v47M1201.5 766v28M1199.5 766v3M1198.5 766v2M1197.5 766v1M1235.5 766v30M1236.5 766v18M1234.5 766v3M1233.5 766v2M1232.5 766v1M1273.5 764v10M1272.5 764v2M1271.5 764v1M1270.5 764v1" stroke="#8b0000" stroke-width="1" fill="none"/><use href="#b5" transform="matrix(1 0.00063 0 0.580 0 797.21)" stroke="#000000" stroke-width="1.0"/><path d="M836.5 799v6M871.5 800v13M872.5 800v7M870.5 800v2M869.5 800v1M868.5 800v1M909.5 801v18M910.5 801v10M908.5 801v3M907.5 801v2M906.5 801v1M944.5 803v16M945.5 803v9M943.5 803v3M942.5 803v2M941.5 803v1M982.5 801v9M981.5 801v2M980.5 801v1M979.5 801v1M1017.5 802v6" stroke="#000000" stroke-width="1" fill="none"/><use href="#b4" transform="matrix(1 0.00035 0 0.633 0 777.20)" stroke="#808080" stroke-width="1.0"/><path d="M982.5 781v2M1016.5 782v6M1054.5 788v8M1089.5 786v9M1088.5 786v2M1087.5 786v1M1086.5 786v1M1127.5 781v9M1126.5 781v2M1125.5 781v1M1124.5 781v1M1162.5 784v4" stroke="#808080" stroke-width="1" fill="none"/><use href="#b1" transform="matrix(1 -0.00060 0 0.536 0 796.06)" stroke="#000000" stroke-width="1.0"/><path d="M473.5 795v8M508.5 794v19M509.5 794v11M507.5 794v3M506.5 794v2M505.5 794v1M546.5 796v29M547.5 796v17M545.5 796v3M544.5 796v2M543.5 796v1M581.5 793v22M582.5 793v13M580.5 793v3M579.5 793v2M578.5 793v1M619.5 793v7" stroke="#000000" stroke-width="1" fill="none"/><use href="#b7" transform="matrix(1 0.00263 0 0.880 0 711.34)" stroke="#0000ff" stroke-width="1.0"/><use href="#b5" transform="matrix(1 0.00110 0 0.890 0 711.06)" stroke="#ffa500" stroke-width="1.0"/><path d="M1057.5 727v3M1091.5 723v7M1130.5 717v18M1131.5 717v10M1129.5 717v3M1128.5 717v2M1127.5 717v1M1164.5 723v16M1165.5 723v9M1163.5 722v3M1162.5 722v2M1161.5 722v1M1202.5 723v6" stroke="#ffa500" stroke-width="1" fill="none"/><use href="#b4" transform="matrix(1 -0.00008 0 0.571 0 796.38)" stroke="#0000ff" stroke-width="1.0"/><use href="#b5" transform="matrix(1 0.00100 0 0.768 0 745.95)" stroke="#ffff00" stroke-width="1.0"/><path d="M726.5 743v3M764.5 745v8M798.5 743v27M799.5 743v16M797.5 743v3M796.5 742v2M795.5 742v1M837.5 749v32M838.5 749v19M836.5 749v3M835.5 748v2M834.5 747v1M871.5 750v27M872.5 750v16M870.5 750v3M869.5 750v2M868.5 750v1M910.5 752v21M911.5 752v12M909.5 752v3M908.5 752v2M907.5 752v1M944.5 754v8" stroke="#ffff00" stroke-width="1" fill="none"/><use href="#b0" transform="matrix(1 -0.00021 0 0.690 0 584.08)" stroke="#00ffff" stroke-width="1.25"/><path d="M433.5 588v3M506.5 582v7M546.5 585v20M545.5 585v3M544.5 585v2M543.5 585v1M580.5 581v29M581.5 581v17M579.5 581v3M578.5 581v2M577.5 581v1M619.5 581v22M618.5 580v3M617.5 580v2M616.5 579v1M653.5 583v8M692.5 582v3" stroke="#00ffff" stroke-width="1" fill="none"/><use href="#b1" transform="matrix(1 0.00087 0 0.789 0 730.54)" stroke="#ff00ff" stroke-width="1.0"/><path d="M578.5 728v6M617.5 726v15M618.5 726v9M616.5 726v2M615.5 726v1M614.5 725v1M651.5 729v32M652.5 729v19M650.5 729v3M649.5 729v2M648.5 728v1M689.5 729v27M690.5 729v16M688.5 729v3M687.5 729v2M686.5 729v1M724.5 727v11M723.5 727v2M722.5 727v1M721.5 727v1M762.5 729v3" stroke="#ff00ff" stroke-width="1" fill="none"/><use href="#b1" transform="matrix(1 -0.00063 0 0.950 0 370.74)" stroke="#00ff00" stroke-width="1.25"/><path d="M765.5 368v3M798.5 366v8M838.5 374v23M839.5 374v13M837.5 374v3M836.5 372v2M835.5 372v1M871.5 374v34M872.5 374v20M870.5 374v3M869.5 374v2M868.5 374v1M911.5 376v22M912.5 376v13M910.5 376v3M909.5 376v2M908.5 376v1M943.5 379v13M942.5 379v2M941.5 379v1M940.5 379v1M983.5 376v3" stroke="#00ff00" stroke-width="1" fill="none"/><use href="#b0" transform="matrix(1 0.00191 0 0.676 0 739.11)" stroke="#ffff00" stroke-width="1.0"/><path d="M1273.5 747v5M1307.5 747v12M1306.5 746v2M1305.5 746v1M1304.5 746v1M1346.5 745v19M1347.5 745v11M1345.5 745v3M1344.5 745v2M1343.5 746v1" stroke="#ffff00" stroke-width="1" fill="none"/><use href="#b4" transform="matrix(1 0.00145 0 0.611 0 769.76)" stroke="#00ffff" stroke-width="1.0"/><path d="M471.5 770v4M505.5 769v12M504.5 769v2M503.5 769v1M502.5 769v1M544.5 771v14M545.5 771v8M543.5 771v2M542.5 771v1M541.5 771v1M578.5 768v11M577.5 768v2M576.5 768v1M575.5 768v1M616.5 767v4" stroke="#00ffff" stroke-width="1" fill="none"/><use href="#b3" transform="matrix(1 0.00034 0 0.513 0 795.99)" stroke="#006400" stroke-width="1.0"/><use href="#b2" transform="matrix(1 0.00187 0 0.843 0 719.37)" stroke="#000000" stroke-width="1.0"/><path d="M944.5 729v2M983.5 726v9M982.5 726v2M981.5 726v1M980.5 726v1M1017.5 728v16M1018.5 728v9M1016.5 727v3M1015.5 727v2M1014.5 727v1M1056.5 736v20M1057.5 736v12M1055.5 735v3M1054.5 735v2M1053.5 735v1M1090.5 732v14M1091.5 732v8M1089.5 732v2M1088.5 733v1M1087.5 733v1M1129.5 726v3" stroke="#000000" stroke-width="1" fill="none"/><use href="#b2" transform="matrix(1 -0.00010 0 0.724 0 771.72)" stroke="#0000ff" stroke-width="1.0"/><path d="M548.5 772v3M582.5 768v11M581.5 768v2M580.5 768v1M579.5 768v1M621.5 768v13M622.5 768v7M620.5 768v2M619.5 768v1M618.5 768v1M655.5 770v12M654.5 770v2M653.5 770v1M652.5 770v1M693.5 770v4" stroke="#0000ff" stroke-width="1" fill="none"/><use href="#b5" transform="matrix(1 -0.00040 0 0.481 0 806.04)" stroke="#00ffff" stroke-width="1.0"/><path d="M655.5 805v5M694.5 804v12M693.5 805v2M692.5 805v1M691.5 805v1M728.5 804v23M729.5 804v13M727.5 804v3M726.5 803v2M725.5 803v1M767.5 805v23M768.5 805v13M766.5 805v3M765.5 804v2M764.5 804v1M801.5 804v16M802.5 804v9M800.5 804v3M799.5 804v2M798.5 804v1M840.5 808v7" stroke="#00ffff" stroke-width="1" fill="none"/><use href="#b3" transform="matrix(1 -0.00037 0 0.556 0 790.03)" stroke="#8b0000" stroke-width="1.0"/><path d="M764.5 788v4M798.5 787v18M799.5 787v10M797.5 787v3M796.5 787v2M795.5 786v1M837.5 792v27M838.5 792v16M836.5 791v3M835.5 791v2M834.5 790v1M871.5 792v30M872.5 792v18M870.5 792v3M869.5 792v2M868.5 792v1M910.5 793v17M911.5 793v10M909.5 793v3M908.5 793v2M907.5 793v1M944.5 795v6" stroke="#8b0000" stroke-width="1" fill="none"/><use href="#b3" transform="matrix(1 0.00086 0 0.625 0 775.46)" stroke="#00ff00" stroke-width="1.0"/><use href="#b4" transform="matrix(1 0.00167 0 0.800 0 664.35)" stroke="#ff0000" stroke-width="1.25"/><path d="M652.5 664v4M694.5 663v5M726.5 662v10M725.5 661v2M724.5 661v1M723.5 661v1M766.5 664v22M765.5 664v3M764.5 663v2M763.5 663v1M798.5 662v38M799.5 662v22M797.5 662v3M796.5 661v2M795.5 661v1M838.5 669v40M839.5 669v24M837.5 669v3M836.5 668v2M835.5 667v1M872.5 670v12M871.5 669v2M870.5 669v1M869.5 669v1" stroke="#ff0000" stroke-width="1" fill="none"/><use href="#b6" transform="matrix(1 0.00124 0 0.711 0 720.02)" stroke="#ffff00" stroke-width="1.0"/><path d="M1016.5 727v3M1055.5 733v11M1054.5 733v2M1053.5 733v1M1052.5 733v1M1089.5 731v18M1090.5 731v10M1088.5 731v3M1087.5 731v2M1086.5 731v1M1128.5 725v31M1129.5 725v18M1127.5 725v3M1126.5 725v2M1125.5 725v1M1162.5 729v17M1163.5 729v10M1161.5 729v3M1160.5 729v2M1159.5 729v1M1200.5 730v5" stroke="#ffff00" stroke-width="1" fill="none"/><use href="#b0" transform="matrix(1 0.00216 0 0.785 0 692.16)" stroke="#808080" stroke-width="1.25"/><path d="M798.5 690v6M837.5 697v16M838.5 697v9M836.5 696v3M835.5 695v2M834.5 694v1M871.5 697v33M872.5 697v19M870.5 697v3M869.5 697v2M868.5 697v1M910.5 699v23M911.5 699v13M909.5 699v3M908.5 699v2M907.5 699v1M944.5 701v17M945.5 701v10M943.5 702v3M942.5 702v2M941.5 702v1M983.5 699v5" stroke="#808080" stroke-width="1" fill="none"/><use href="#b2" transform="matrix(1 -0.00009 0 0.554 0 792.71)" stroke="#ffc0cb" stroke-width="1.0"/><path d="M581.5 790v6M620.5 790v11M619.5 790v2M618.5 790v1M617.5 789v1M654.5 792v18M655.5 792v10M653.5 792v3M652.5 791v2M651.5 791v1M693.5 791v22M694.5 791v13M692.5 791v3M691.5 791v2M690.5 791v1M727.5 790v15M728.5 790v9M726.5 790v2M725.5 790v1M724.5 790v1M766.5 791v6" stroke="#ffc0cb" stroke-width="1" fill="none"/><use href="#b6" transform="matrix(1 -0.00020 0 0.642 0 777.61)" stroke="#ff00ff" stroke-width="1.0"/><use href="#b1" transform="matrix(1 0.00188 0 0.920 0 611.67)" stroke="#00ff00" stroke-width="1.25"/><path d="M727.5 609v4M764.5 610v21M763.5 610v3M762.5 610v2M761.5 610v1M801.5 611v44M800.5 611v3M799.5 610v2M798.5 609v1M836.5 615v40M837.5 615v24M835.5 615v3M834.5 614v2M833.5 613v1M873.5 618v20M874.5 618v12M872.5 618v3M871.5 617v2M870.5 617v1M910.5 619v5" stroke="#00ff00" stroke-width="1" fill="none"/><use href="#b5" transform="matrix(1 -0.00005 0 0.687 0 773.68)" stroke="#000000" stroke-width="1.0"/><use href="#b0" transform="matrix(1 -0.00019 0 0.615 0 803.81)" stroke="#006400" stroke-width="1.0"/><path d="M1128.5 807v9M1127.5 807v2M1126.5 807v1M1125.5 807v1M1162.5 810v25M1163.5 810v15M1161.5 810v3M1160.5 810v2M1159.5 810v1M1200.5 811v33M1201.5 811v19M1199.5 811v3M1198.5 811v2M1197.5 811v1M1235.5 811v32M1236.5 811v19M1234.5 811v3M1233.5 811v2M1232.5 811v1M1273.5 809v12M1272.5 809v2M1271.5 809v1M1270.5 809v1M1308.5 808v5" stroke="#006400" stroke-width="1" fill="none"/><use href="#b4" transform="matrix(1 -0.00018 0 0.616 0 778.14)" stroke="#0000ff" stroke-width="1.0"/><path d="M1017.5 783v5M1055.5 788v8M1090.5 786v13M1091.5 786v7M1089.5 786v2M1088.5 786v1M1087.5 786v1M1128.5 781v9M1127.5 781v2M1126.5 781v1M1125.5 781v1M1162.5 785v7M1201.5 785v3" stroke="#0000ff" stroke-width="1" fill="none"/><use href="#b2" transform="matrix(1 0.00083 0 0.547 0 791.95)" stroke="#8b0000" stroke-width="1.0"/><use href="#b1" transform="matrix(1 0.00139 0 0.750 0 762.05)" stroke="#8b0000" stroke-width="1.0"/><path d="M616.5 758v-9M615.5 758v-2M614.5 757v-1M613.5 757v-1M651.5 761v-27M652.5 761v-16M650.5 761v-3M649.5 761v-2M648.5 760v-1M689.5 761v-34M690.5 761v-20M688.5 761v-3M687.5 761v-2M686.5 761v-1M724.5 759v-24M725.5 759v-14M723.5 759v-3M722.5 759v-2M721.5 759v-1M762.5 761v-8M797.5 759v-2" stroke="#8b0000" stroke-width="1" fill="none"/><use href="#b1" transform="matrix(1 0.00051 0 0.666 0 784.65)" stroke="#00ff00" stroke-width="1.0"/><path d="M1058.5 797v2M1093.5 793v6M1131.5 789v12M1130.5 789v2M1129.5 789v1M1128.5 789v1M1166.5 793v7M1204.5 793v3" stroke="#00ff00" stroke-width="1" fill="none"/><use href="#b3" transform="matrix(1 0.00132 0 0.801 0 707.88)" stroke="#ffff00" stroke-width="1.0"/><use href="#b5" transform="matrix(1 0.00213 0 0.821 0 702.49)" stroke="#ffa500" stroke-width="1.0"/><use href="#b1" transform="matrix(1 0.00029 0 0.591 0 789.81)" stroke="#00ff00" stroke-width="1.0"/><path d="M621.5 787v6M655.5 789v11M654.5 789v2M653.5 789v1M652.5 789v1M694.5 788v14M695.5 788v8M693.5 788v2M692.5 789v1M691.5 789v1M728.5 788v18M729.5 788v10M727.5 787v3M726.5 787v2M725.5 787v1M767.5 789v14M768.5 789v8M766.5 789v2M765.5 788v1M764.5 788v1M801.5 789v7" stroke="#00ff00" stroke-width="1" fill="none"/><use href="#b4" transform="matrix(1 0.00104 0 0.900 0 639.19)" stroke="#ffc0cb" stroke-width="1.25"/><path d="M801.5 638v6M838.5 644v17M839.5 644v10M837.5 643v3M836.5 642v2M835.5 641v1M871.5 644v28M872.5 644v16M870.5 644v3M869.5 644v2M868.5 644v1M910.5 646v10M909.5 646v2M908.5 646v1M907.5 646v1M944.5 649v3" stroke="#ffc0cb" stroke-width="1" fill="none"/><use href="#b6" transform="matrix(1 0.00024 0 0.584 0 804.31)" stroke="#006400" stroke-width="1.0"/><path d="M619.5 802v7M653.5 803v15M654.5 803v9M652.5 803v2M651.5 803v1M650.5 803v1M692.5 803v28M693.5 803v16M691.5 803v3M690.5 803v2M689.5 803v1M726.5 802v19M727.5 802v11M725.5 801v3M724.5 801v2M723.5 801v1M765.5 803v10M764.5 803v2M763.5 803v1M762.5 803v1M799.5 802v3" stroke="#006400" stroke-width="1" fill="none"/><use href="#b6" transform="matrix(1 -0.00018 0 0.603 0 777.91)" stroke="#006400" stroke-width="1.0"/><path d="M1234.5 785v3M1273.5 783v10M1272.5 783v2M1271.5 783v1M1270.5 783v1M1307.5 782v18M1308.5 782v10M1306.5 782v3M1305.5 782v2M1304.5 781v1M1345.5 781v18M1346.5 781v10M1344.5 781v3M1343.5 781v2M1342.5 781v1" stroke="#006400" stroke-width="1" fill="none"/><use href="#b1" transform="matrix(1 0.00213 0 0.749 0 707.84)" stroke="#8b0000" stroke-width="1.0"/><path d="M874.5 713v-2M912.5 714v-15M913.5 714v-9M911.5 714v-2M910.5 714v-1M909.5 714v-1M946.5 716v-29M947.5 716v-17M945.5 716v-3M944.5 717v-2M943.5 717v-1M985.5 714v-25M986.5 714v-15M984.5 714v-3M983.5 714v-2M982.5 714v-1M1019.5 716v-14M1020.5 716v-8M1018.5 716v-2M1017.5 716v-1M1016.5 716v-1M1058.5 723v-3" stroke="#8b0000" stroke-width="1" fill="none"/><use href="#b4" transform="matrix(1 0.00100 0 0.707 0 739.45)" stroke="#ffc0cb" stroke-width="1.0"/><path d="M872.5 744v2M910.5 745v9M909.5 745v2M908.5 745v1M907.5 745v1M945.5 747v29M946.5 747v17M944.5 747v3M943.5 747v2M942.5 747v1M983.5 745v33M984.5 745v19M982.5 744v3M981.5 744v2M980.5 744v1M1018.5 746v32M1019.5 746v19M1017.5 746v3M1016.5 746v2M1015.5 745v1M1056.5 752v18M1057.5 752v10M1055.5 752v3M1054.5 752v2M1053.5 752v1M1091.5 749v4" stroke="#ffc0cb" stroke-width="1" fill="none"/><use href="#b7" transform="matrix(1 0.00113 0 0.746 0 764.19)" stroke="#00ffff" stroke-width="1.0"/><path d="M801.5 763v3M840.5 768v12M839.5 768v2M838.5 768v1M837.5 768v1M874.5 769v19M875.5 769v11M873.5 769v3M872.5 769v2M871.5 768v1M912.5 770v10M911.5 770v2M910.5 770v1M909.5 770v1M947.5 771v5" stroke="#00ffff" stroke-width="1" fill="none"/><use href="#b4" transform="matrix(1 0.00069 0 0.605 0 789.54)" stroke="#0000ff" stroke-width="1.0"/><use href="#b4" transform="matrix(1 0.00211 0 0.847 0 721.66)" stroke="#ffc0cb" stroke-width="1.0"/><use href="#b7" transform="matrix(1 0.00136 0 0.813 0 720.40)" stroke="#00ff00" stroke-width="1.0"/><path d="M1277.5 729v7M1311.5 729v20M1312.5 729v12M1310.5 729v3M1309.5 729v2M1308.5 728v1" stroke="#00ff00" stroke-width="1" fill="none"/><use href="#b1" transform="matrix(1 0.00117 0 0.636 0 785.72)" stroke="#8b0000" stroke-width="1.0"/><use href="#b4" transform="matrix(1 0.00024 0 0.714 0 690.31)" stroke="#808080" stroke-width="1.25"/><path d="M1236.5 699v7M1274.5 696v20M1275.5 696v12M1273.5 696v3M1272.5 697v2M1271.5 697v1M1309.5 696v22M1310.5 696v13M1308.5 696v3M1307.5 696v2M1306.5 696v1M1347.5 694v19M1348.5 694v11M1346.5 694v3M1345.5 694v2M1344.5 695v1" stroke="#808080" stroke-width="1" fill="none"/><use href="#b0" transform="matrix(1 0.00000 0 0.600 0 825.30)" stroke="#000000" stroke-width="1.25"/><path d="M506.5 824v3M548.5 826v12M547.5 826v2M546.5 826v1M545.5 826v1M579.5 823v21M580.5 823v12M578.5 823v3M577.5 823v2M576.5 823v1M621.5 823v24M622.5 823v14M620.5 823v3M619.5 822v2M618.5 822v1M652.5 824v12M651.5 824v2M650.5 824v1M649.5 823v1M694.5 824v3M1181.5 833v5M1222.5 833v6M1258.5 831v5" stroke="#000000" stroke-width="1" fill="none"/><use href="#b2" transform="matrix(1 0.00193 0 0.794 0 733.43)" stroke="#808080" stroke-width="1.0"/><use href="#b3" transform="matrix(1 0.00088 0 0.606 0 783.58)" stroke="#00ffff" stroke-width="1.0"/><use href="#b2" transform="matrix(1 0.00053 0 0.614 0 793.88)" stroke="#00ffff" stroke-width="1.0"/><use href="#b1" transform="matrix(1 0.00039 0 0.765 0 659.45)" stroke="#00ff00" stroke-width="1.25"/><path d="M1055.5 673v8M1090.5 669v20M1091.5 669v12M1089.5 670v3M1088.5 670v2M1087.5 670v1M1128.5 664v31M1129.5 664v18M1127.5 664v3M1126.5 664v2M1125.5 664v1M1163.5 668v32M1164.5 668v19M1162.5 668v3M1161.5 668v2M1160.5 668v1M1201.5 669v15M1202.5 669v9M1200.5 669v2M1199.5 669v1M1198.5 669v1M1235.5 669v5" stroke="#00ff00" stroke-width="1" fill="none"/><use href="#b2" transform="matrix(1 0.00019 0 0.830 0 661.93)" stroke="#ff00ff" stroke-width="1.25"/><path d="M1016.5 668v4M1055.5 676v11M1054.5 676v2M1053.5 676v1M1052.5 676v1M1089.5 673v17M1090.5 673v10M1088.5 673v3M1087.5 673v2M1086.5 674v1M1127.5 667v20M1128.5 667v12M1126.5 666v3M1125.5 666v2M1124.5 666v1M1162.5 671v9M1161.5 671v2M1160.5 671v1M1159.5 670v1" stroke="#ff00ff" stroke-width="1" fill="none"/><use href="#b2" transform="matrix(1 0.00132 0 0.712 0 680.08)" stroke="#006400" stroke-width="1.25"/><path d="M764.5 679v3M799.5 678v13M800.5 678v7M798.5 678v2M797.5 677v1M796.5 677v1M837.5 684v18M838.5 684v10M836.5 683v3M835.5 682v2M834.5 682v1M872.5 685v20M873.5 685v12M871.5 684v3M870.5 684v2M869.5 684v1M910.5 686v9M909.5 686v2M908.5 686v1M907.5 686v1M944.5 688v3" stroke="#006400" stroke-width="1" fill="none"/><use href="#b4" transform="matrix(1 -0.00026 0 0.621 0 777.80)" stroke="#0000ff" stroke-width="1.0"/><use href="#b5" transform="matrix(1 0.00197 0 0.714 0 733.00)" stroke="#006400" stroke-width="1.0"/><use href="#b6" transform="matrix(1 0.00157 0 0.631 0 760.12)" stroke="#0000ff" stroke-width="1.0"/><path d="M690.5 760v5M725.5 758v18M726.5 758v10M724.5 758v3M723.5 758v2M722.5 758v1M763.5 759v30M764.5 759v18M762.5 759v3M761.5 759v2M760.5 759v1M798.5 758v23M799.5 758v13M797.5 758v3M796.5 758v2M795.5 757v1M836.5 763v8M871.5 764v3" stroke="#0000ff" stroke-width="1" fill="none"/><use href="#b3" transform="matrix(1 0.00181 0 0.834 0 715.79)" stroke="#8b0000" stroke-width="1.0"/><path d="M548.5 718v2M582.5 713v8M620.5 713v12M619.5 713v2M618.5 712v1M617.5 712v1M655.5 715v8M693.5 715v3" stroke="#8b0000" stroke-width="1" fill="none"/><use href="#b1" transform="matrix(1 0.00058 0 0.725 0 694.07)" stroke="#000000" stroke-width="1.25"/><path d="M763.5 692v4M797.5 691v18M798.5 691v10M796.5 690v3M795.5 690v2M794.5 690v1M836.5 696v28M837.5 696v16M835.5 696v3M834.5 695v2M833.5 694v1M870.5 698v22M871.5 698v13M869.5 698v3M868.5 698v2M867.5 698v1M909.5 699v9M908.5 699v2M907.5 699v1M906.5 699v1M943.5 702v2" stroke="#000000" stroke-width="1" fill="none"/><use href="#b0" transform="matrix(1 0.00198 0 0.800 0 665.63)" stroke="#ff0000" stroke-width="1.25"/><path d="M472.5 666v6M506.5 664v15M507.5 664v9M505.5 664v2M504.5 664v1M503.5 664v1M545.5 668v25M546.5 668v15M544.5 668v3M543.5 668v2M542.5 668v1M579.5 663v25M580.5 663v15M578.5 663v3M577.5 663v2M576.5 664v1M618.5 662v12M617.5 662v2M616.5 662v1M615.5 661v1M652.5 665v5" stroke="#ff0000" stroke-width="1" fill="none"/><use href="#b5" transform="matrix(1 0.00038 0 0.625 0 766.10)" stroke="#0000ff" stroke-width="1.0"/><path d="M726.5 763v3M765.5 765v8M799.5 764v11M798.5 764v2M797.5 763v1M796.5 763v1M838.5 769v8M872.5 769v6M911.5 770v2" stroke="#0000ff" stroke-width="1" fill="none"/><use href="#b7" transform="matrix(1 0.00041 0 0.570 0 803.75)" stroke="#8b0000" stroke-width="1.0"/><use href="#b2" transform="matrix(1 0.00247 0 0.825 0 694.44)" stroke="#ff00ff" stroke-width="1.25"/><path d="M654.5 695v7M692.5 694v16M693.5 694v9M691.5 694v3M690.5 694v2M689.5 694v1M727.5 693v27M728.5 693v16M726.5 692v3M725.5 692v2M724.5 692v1M765.5 694v20M766.5 694v12M764.5 694v3M763.5 694v2M762.5 694v1M799.5 693v12M798.5 693v2M797.5 692v1M796.5 692v1M838.5 700v2" stroke="#ff00ff" stroke-width="1" fill="none"/><use href="#b0" transform="matrix(1 0.00094 0 0.900 0 642.03)" stroke="#8b0000" stroke-width="1.25"/><path d="M873.5 647v3M908.5 649v8M946.5 650v17M947.5 650v10M945.5 651v3M944.5 651v2M943.5 652v1M981.5 648v20M980.5 648v3M979.5 648v2M978.5 647v1M1019.5 651v20M1018.5 650v3M1017.5 650v2M1016.5 650v1M1054.5 658v17M1055.5 658v10M1053.5 658v3M1052.5 658v2M1051.5 657v1M1090.5 654v4" stroke="#8b0000" stroke-width="1" fill="none"/><use href="#b0" transform="matrix(1 0.00039 0 0.597 0 799.47)" stroke="#000000" stroke-width="1.0"/><path d="M1161.5 806v2M1200.5 807v9M1199.5 807v2M1198.5 807v1M1197.5 807v1M1234.5 807v20M1235.5 807v12M1233.5 807v3M1232.5 807v2M1231.5 807v1M1273.5 805v24M1274.5 805v14M1272.5 805v3M1271.5 805v2M1270.5 805v1M1307.5 804v18M1308.5 804v10M1306.5 804v3M1305.5 804v2M1304.5 804v1M1346.5 803v11M1345.5 803v2M1344.5 803v1M1343.5 804v1" stroke="#000000" stroke-width="1" fill="none"/><use href="#b7" transform="matrix(1 0.00046 0 0.720 0 748.83)" stroke="#ffc0cb" stroke-width="1.0"/><path d="M1089.5 759v3M1127.5 753v9M1126.5 753v2M1125.5 753v1M1124.5 753v1M1162.5 757v16M1163.5 757v9M1161.5 757v3M1160.5 757v2M1159.5 757v1M1200.5 758v20M1201.5 758v12M1199.5 758v3M1198.5 758v2M1197.5 758v1M1235.5 758v28M1236.5 758v16M1234.5 758v3M1233.5 758v2M1232.5 758v1M1273.5 755v14M1274.5 755v8M1272.5 755v2M1271.5 755v1M1270.5 755v1M1307.5 755v4" stroke="#ffc0cb" stroke-width="1" fill="none"/><use href="#b0" transform="matrix(1 0.00195 0 0.768 0 732.42)" stroke="#006400" stroke-width="1.0"/><path d="M944.5 741v4M983.5 739v12M982.5 739v2M981.5 739v1M980.5 739v1M1017.5 740v24M1018.5 740v14M1016.5 740v3M1015.5 740v2M1014.5 739v1M1055.5 747v32M1056.5 747v19M1054.5 747v3M1053.5 747v2M1052.5 747v1M1090.5 744v17M1091.5 744v10M1089.5 744v3M1088.5 745v2M1087.5 745v1M1128.5 739v7" stroke="#006400" stroke-width="1" fill="none"/><use href="#b2" transform="matrix(1 -0.00063 0 0.800 0 527.24)" stroke="#ffff00" stroke-width="1.25"/><path d="M506.5 525v3M547.5 528v7M579.5 523v24M578.5 523v3M577.5 524v2M576.5 524v1M620.5 523v31M621.5 523v18M619.5 523v3M618.5 522v2M617.5 522v1M652.5 525v22M651.5 525v3M650.5 525v2M649.5 524v1M693.5 525v5M725.5 522v2" stroke="#ffff00" stroke-width="1" fill="none"/><use href="#b3" transform="matrix(1 0.00021 0 0.700 0 549.92)" stroke="#808080" stroke-width="1.25"/><path d="M584.5 547v2M616.5 546v5M656.5 548v11M655.5 549v2M654.5 549v1M653.5 549v1M689.5 548v34M688.5 548v3M687.5 548v2M686.5 548v1M730.5 547v48M729.5 547v3M728.5 548v2M727.5 547v1M762.5 548v33M761.5 548v3M760.5 548v2M759.5 548v1M802.5 548v10M801.5 548v2M800.5 548v1M799.5 547v1M834.5 551v5M1090.5 559v-5M1128.5 554v-16M1127.5 554v-3M1126.5 554v-2M1125.5 554v-1M1162.5 558v-21M1161.5 558v-3M1160.5 557v-2M1159.5 557v-1M1200.5 558v-19M1199.5 558v-3M1198.5 558v-2M1197.5 558v-1M1234.5 559v-7M1274.5 556v-3" stroke="#808080" stroke-width="1" fill="none"/><use href="#b0" transform="matrix(1 0.00125 0 0.706 0 774.56)" stroke="#0000ff" stroke-width="1.0"/><path d="M1090.5 785v5M1129.5 780v15M1130.5 780v9M1128.5 780v2M1127.5 780v1M1126.5 780v1M1163.5 784v23M1164.5 784v13M1162.5 784v3M1161.5 783v2M1160.5 783v1M1202.5 784v28M1203.5 784v16M1201.5 784v3M1200.5 784v2M1199.5 784v1M1236.5 784v16M1237.5 784v9M1235.5 784v3M1234.5 785v2M1233.5 785v1M1275.5 782v9M1274.5 782v2M1273.5 782v1M1272.5 782v1M1309.5 782v3" stroke="#0000ff" stroke-width="1" fill="none"/><use href="#b2" transform="matrix(1 0.00303 0 0.770 0 614.42)" stroke="#ff00ff" stroke-width="1.25"/><path d="M912.5 622v12M911.5 622v2M910.5 622v1M909.5 622v1M942.5 625v29M943.5 625v17M941.5 625v3M940.5 625v2M939.5 625v1M985.5 622v26M984.5 622v3M983.5 622v2M982.5 622v1M1014.5 623v20M1013.5 622v3M1012.5 622v2M1011.5 622v1M1051.5 630v12M1050.5 630v2M1049.5 630v1M1048.5 630v1M1090.5 627v3" stroke="#ff00ff" stroke-width="1" fill="none"/><use href="#b2" transform="matrix(1 0.00089 0 0.499 0 802.74)" stroke="#00ff00" stroke-width="1.0"/><use href="#b5" transform="matrix(1 0.00145 0 0.868 0 710.17)" stroke="#000000" stroke-width="1.0"/><path d="M475.5 709v16M476.5 709v9M474.5 709v3M473.5 710v2M472.5 710v1M510.5 709v11M509.5 709v2M508.5 709v1M507.5 709v1M548.5 712v2" stroke="#000000" stroke-width="1" fill="none"/><use href="#b3" transform="matrix(1 0.00209 0 0.837 0 708.07)" stroke="#8b0000" stroke-width="1.0"/><path d="M654.5 708v7M693.5 707v24M694.5 707v14M692.5 707v3M691.5 708v2M690.5 707v1M727.5 706v25M728.5 706v15M726.5 705v3M725.5 705v2M724.5 705v1M766.5 708v17M767.5 708v10M765.5 707v3M764.5 707v2M763.5 707v1M800.5 707v8" stroke="#8b0000" stroke-width="1" fill="none"/><use href="#b5" transform="matrix(1 0.00003 0 0.614 0 798.21)" stroke="#000000" stroke-width="1.0"/><path d="M472.5 798v10M471.5 798v2M470.5 798v1M469.5 798v1M506.5 797v26M507.5 797v15M505.5 797v3M504.5 796v2M503.5 796v1M545.5 799v26M546.5 799v15M544.5 799v3M543.5 799v2M542.5 799v1M579.5 795v13M580.5 795v7M578.5 796v2M577.5 796v1M576.5 796v1M618.5 795v6" stroke="#000000" stroke-width="1" fill="none"/><use href="#b4" transform="matrix(1 0.00004 0 0.645 0 764.85)" stroke="#00ffff" stroke-width="1.0"/><path d="M1054.5 776v6M1088.5 773v12M1087.5 774v2M1086.5 774v1M1085.5 774v1M1126.5 768v15M1127.5 768v9M1125.5 768v2M1124.5 768v1M1123.5 768v1M1161.5 772v9M1160.5 772v2M1159.5 771v1M1158.5 771v1M1199.5 772v4" stroke="#00ffff" stroke-width="1" fill="none"/><use href="#b5" transform="matrix(1 0.00069 0 0.701 0 761.27)" stroke="#006400" stroke-width="1.0"/><path d="M472.5 761v26M473.5 761v15M471.5 761v3M470.5 761v2M469.5 761v1M507.5 760v12M506.5 760v2M505.5 760v1M504.5 760v1" stroke="#006400" stroke-width="1" fill="none"/><use href="#b5" transform="matrix(1 0.00142 0 0.634 0 762.08)" stroke="#00ff00" stroke-width="1.0"/><path d="M944.5 769v5M983.5 767v10M982.5 767v2M981.5 767v1M980.5 767v1M1017.5 768v10M1016.5 768v2M1015.5 768v1M1014.5 768v1M1056.5 774v7M1090.5 772v6" stroke="#00ff00" stroke-width="1" fill="none"/><use href="#b7" transform="matrix(1 -0.00006 0 0.552 0 803.98)" stroke="#ff0000" stroke-width="1.0"/><use href="#b1" transform="matrix(1 0.00238 0 0.866 0 716.88)" stroke="#0000ff" stroke-width="1.0"/><path d="M1129.5 724v5M1163.5 729v15M1164.5 729v9M1162.5 729v2M1161.5 729v1M1160.5 729v1M1201.5 730v25M1202.5 730v15M1200.5 730v3M1199.5 730v2M1198.5 730v1M1236.5 730v30M1237.5 730v18M1235.5 730v3M1234.5 730v2M1233.5 730v1M1274.5 727v13M1275.5 727v7M1273.5 727v2M1272.5 727v1M1271.5 727v1M1309.5 727v3" stroke="#0000ff" stroke-width="1" fill="none"/><use href="#b6" transform="matrix(1 0.00187 0 0.838 0 701.65)" stroke="#0000ff" stroke-width="1.0"/><path d="M582.5 699v4M620.5 699v10M619.5 699v2M618.5 698v1M617.5 698v1M655.5 701v13M656.5 701v7M654.5 701v2M653.5 701v1M652.5 701v1M693.5 701v9M692.5 701v2M691.5 701v1M690.5 701v1M728.5 700v3" stroke="#0000ff" stroke-width="1" fill="none"/><use href="#b1" transform="matrix(1 0.00095 0 0.807 0 671.03)" stroke="#00ff00" stroke-width="1.25"/><path d="M475.5 670v32M476.5 670v19M474.5 670v3M473.5 670v2M472.5 671v1M509.5 670v17M510.5 670v10M508.5 669v3M507.5 669v2M506.5 669v1M547.5 672v5" stroke="#00ff00" stroke-width="1" fill="none"/><use href="#b1" transform="matrix(1 0.00031 0 0.598 0 777.81)" stroke="#ff0000" stroke-width="1.0"/><use href="#b2" transform="matrix(1 0.00047 0 0.709 0 762.34)" stroke="#00ffff" stroke-width="1.0"/><use href="#b5" transform="matrix(1 -0.00075 0 0.498 0 805.49)" stroke="#000000" stroke-width="1.0"/><use href="#b5" transform="matrix(1 -0.00035 0 0.559 0 805.08)" stroke="#ffff00" stroke-width="1.0"/><use href="#b2" transform="matrix(1 0.00182 0 0.786 0 734.37)" stroke="#8b0000" stroke-width="1.0"/><path d="M763.5 733v4M798.5 732v11M797.5 732v2M796.5 731v1M795.5 731v1M836.5 738v17M837.5 738v10M835.5 737v3M834.5 736v2M833.5 736v1M871.5 739v16M872.5 739v9M870.5 739v3M869.5 739v2M868.5 739v1M909.5 741v7" stroke="#8b0000" stroke-width="1" fill="none"/><use href="#b3" transform="matrix(1 0.00063 0 0.739 0 746.26)" stroke="#ffff00" stroke-width="1.0"/><path d="M1165.5 756v2M1204.5 756v9M1203.5 756v2M1202.5 756v1M1201.5 756v1M1238.5 756v18M1239.5 756v10M1237.5 756v3M1236.5 756v2M1235.5 756v1M1276.5 753v28M1277.5 753v16M1275.5 753v3M1274.5 753v2M1273.5 753v1M1311.5 753v29M1312.5 753v17M1310.5 753v3M1309.5 753v2M1308.5 753v1" stroke="#ffff00" stroke-width="1" fill="none"/><use href="#b4" transform="matrix(1 0.00101 0 0.855 0 720.15)" stroke="#ffc0cb" stroke-width="1.0"/><use href="#b4" transform="matrix(1 0.00147 0 0.708 0 727.53)" stroke="#00ffff" stroke-width="1.0"/><use href="#b0" transform="matrix(1 0.00000 0 1.000 0 350.30)" stroke="#00ff00" stroke-width="1.25"/><path d="M653.5 349v2M692.5 348v2M727.5 346v3M765.5 348v7M800.5 348v21M801.5 348v12M799.5 346v3M798.5 346v2M797.5 345v1M837.5 354v22M838.5 354v13M836.5 353v3M835.5 352v2M834.5 351v1M872.5 355v12M873.5 355v7M871.5 355v2M870.5 355v1M869.5 355v1M910.5 356v12M911.5 356v7M909.5 357v2M908.5 357v1M907.5 357v1M945.5 359v4M982.5 356v3" stroke="#00ff00" stroke-width="1" fill="none"/><use href="#b0" transform="matrix(1 0.00102 0 0.640 0 753.61)" stroke="#ffc0cb" stroke-width="1.0"/><use href="#b4" transform="matrix(1 -0.00013 0 0.585 0 802.36)" stroke="#ffc0cb" stroke-width="1.0"/><path d="M1165.5 809v3M1203.5 809v15M1204.5 809v9M1202.5 809v2M1201.5 809v1M1200.5 809v1M1238.5 809v31M1239.5 809v18M1237.5 809v3M1236.5 809v2M1235.5 809v1M1276.5 807v24M1277.5 807v14M1275.5 807v3M1274.5 807v2M1273.5 807v1M1310.5 807v10M1309.5 807v2M1308.5 807v1M1307.5 806v1" stroke="#ffc0cb" stroke-width="1" fill="none"/><use href="#b7" transform="matrix(1 0.00057 0 0.722 0 760.00)" stroke="#00ffff" stroke-width="1.0"/><use href="#b3" transform="matrix(1 0.00207 0 0.745 0 719.80)" stroke="#ffff00" stroke-width="1.0"/><path d="M473.5 720v5M508.5 719v16M509.5 719v9M507.5 719v3M506.5 719v2M505.5 719v1M546.5 722v28M547.5 722v16M545.5 722v3M544.5 722v2M543.5 722v1M580.5 718v36M581.5 718v21M579.5 718v3M578.5 718v2M577.5 718v1M619.5 717v27M620.5 717v16M618.5 717v3M617.5 717v2M616.5 716v1M653.5 720v18M654.5 720v10M652.5 720v3M651.5 719v2M650.5 719v1M692.5 719v7M726.5 718v2" stroke="#ffff00" stroke-width="1" fill="none"/><use href="#b2" transform="matrix(1 0.00022 0 0.508 0 792.78)" stroke="#808080" stroke-width="1.0"/><path d="M728.5 791v7M766.5 792v17M767.5 792v10M765.5 792v3M764.5 791v2M763.5 791v1M800.5 792v19M801.5 792v11M799.5 791v3M798.5 791v2M797.5 790v1M839.5 795v20M840.5 795v12M838.5 795v3M837.5 795v2M836.5 794v1M873.5 795v22M874.5 795v13M872.5 795v3M871.5 795v2M870.5 795v1M912.5 796v10M911.5 796v2M910.5 796v1M909.5 796v1M946.5 797v3" stroke="#808080" stroke-width="1" fill="none"/><use href="#b2" transform="matrix(1 0.00102 0 0.615 0 781.09)" stroke="#ff00ff" stroke-width="1.0"/><path d="M1203.5 790v2M1237.5 790v10M1236.5 790v2M1235.5 790v1M1234.5 790v1M1276.5 787v22M1277.5 787v13M1275.5 787v3M1274.5 787v2M1273.5 787v1M1310.5 788v42M1311.5 788v25M1309.5 787v3M1308.5 787v2M1307.5 787v1" stroke="#ff00ff" stroke-width="1" fill="none"/><use href="#b3" transform="matrix(1 0.00146 0 0.770 0 619.13)" stroke="#ff00ff" stroke-width="1.25"/><path d="M1014.5 626v3M1051.5 633v12M1050.5 633v2M1049.5 633v1M1048.5 633v1M1093.5 630v27M1092.5 630v3M1091.5 630v2M1090.5 630v1M1124.5 625v40M1125.5 625v24M1123.5 625v3M1122.5 625v2M1121.5 625v1M1166.5 630v20M1165.5 630v3M1164.5 630v2M1163.5 629v1M1196.5 630v10M1195.5 630v2M1194.5 630v1M1193.5 630v1M1237.5 630v5" stroke="#ff00ff" stroke-width="1" fill="none"/><use href="#b3" transform="matrix(1 0.00113 0 0.707 0 686.26)" stroke="#808080" stroke-width="1.25"/><path d="M617.5 683v5M652.5 686v11M651.5 685v2M650.5 685v1M649.5 685v1M690.5 685v33M691.5 685v19M689.5 685v3M688.5 685v2M687.5 685v1M725.5 683v40M726.5 683v24M724.5 683v3M723.5 683v2M722.5 683v1M763.5 685v26M764.5 685v15M762.5 685v3M761.5 685v2M760.5 685v1M797.5 683v13M798.5 683v7M796.5 683v2M795.5 683v1M794.5 682v1M836.5 689v4" stroke="#808080" stroke-width="1" fill="none"/><use href="#b4" transform="matrix(1 0.00132 0 0.809 0 739.05)" stroke="#808080" stroke-width="1.0"/><path d="M872.5 744v5M910.5 745v11M909.5 745v2M908.5 745v1M907.5 745v1M945.5 747v10M944.5 748v2M943.5 748v1M942.5 748v1M983.5 745v7M1018.5 747v3" stroke="#808080" stroke-width="1" fill="none"/><use href="#b4" transform="matrix(1 0.00188 0 0.739 0 727.11)" stroke="#ffc0cb" stroke-width="1.0"/><path d="M871.5 732v6M910.5 733v17M911.5 733v10M909.5 733v3M908.5 733v2M907.5 734v1M944.5 736v17M945.5 736v10M943.5 736v3M942.5 736v2M941.5 736v1M983.5 733v15M984.5 733v9M982.5 733v2M981.5 733v1M980.5 733v1M1017.5 735v12M1016.5 734v2M1015.5 734v1M1014.5 734v1M1056.5 742v4" stroke="#ffc0cb" stroke-width="1" fill="none"/><use href="#b5" transform="matrix(1 0.00108 0 0.701 0 752.60)" stroke="#ff00ff" stroke-width="1.0"/><path d="M982.5 758v8M1016.5 759v12M1015.5 759v2M1014.5 758v1M1013.5 758v1M1054.5 765v19M1055.5 765v11M1053.5 765v3M1052.5 765v2M1051.5 765v1M1089.5 763v28M1090.5 763v16M1088.5 763v3M1087.5 763v2M1086.5 764v1M1127.5 758v18M1128.5 758v10M1126.5 757v3M1125.5 757v2M1124.5 757v1M1162.5 761v10M1161.5 761v2M1160.5 761v1M1159.5 761v1M1200.5 762v5" stroke="#ff00ff" stroke-width="1" fill="none"/><use href="#b7" transform="matrix(1 0.00120 0 0.598 0 785.19)" stroke="#808080" stroke-width="1.0"/><path d="M474.5 785v8M508.5 784v3" stroke="#808080" stroke-width="1" fill="none"/><use href="#b6" transform="matrix(1 0.00216 0 0.795 0 733.79)" stroke="#808080" stroke-width="1.0"/><use href="#b5" transform="matrix(1 0.00193 0 0.802 0 721.73)" stroke="#ffc0cb" stroke-width="1.0"/><path d="M983.5 728v5M1017.5 730v11M1016.5 730v2M1015.5 729v1M1014.5 729v1M1056.5 737v22M1057.5 737v13M1055.5 737v3M1054.5 737v2M1053.5 737v1M1090.5 734v27M1091.5 734v16M1089.5 734v3M1088.5 734v2M1087.5 735v1M1129.5 728v23M1130.5 728v13M1128.5 728v3M1127.5 728v2M1126.5 728v1M1163.5 733v10M1162.5 733v2M1161.5 732v1M1160.5 732v1M1201.5 733v3" stroke="#ffc0cb" stroke-width="1" fill="none"/><use href="#b1" transform="matrix(1 0.00145 0 0.745 0 756.72)" stroke="#ff00ff" stroke-width="1.0"/><path d="M981.5 762v8M1015.5 763v17M1016.5 763v10M1014.5 763v3M1013.5 763v2M1012.5 763v1M1054.5 771v10M1053.5 770v2M1052.5 770v1M1051.5 770v1M1088.5 768v5" stroke="#ff00ff" stroke-width="1" fill="none"/><use href="#b0" transform="matrix(1 0.00021 0 0.628 0 790.93)" stroke="#006400" stroke-width="1.0"/><use href="#b6" transform="matrix(1 0.00211 0 0.844 0 715.03)" stroke="#ffff00" stroke-width="1.0"/><use href="#b5" transform="matrix(1 0.00058 0 0.552 0 784.93)" stroke="#00ffff" stroke-width="1.0"/><use href="#b1" transform="matrix(1 0.00146 0 0.598 0 766.66)" stroke="#000000" stroke-width="1.0"/><use href="#b0" transform="matrix(1 0.00093 0 0.859 0 722.51)" stroke="#808080" stroke-width="1.0"/><path d="M471.5 722v14M472.5 722v8M470.5 722v2M469.5 723v1M468.5 723v1M506.5 721v22M507.5 721v13M505.5 721v3M504.5 721v2M503.5 720v1M544.5 724v18M545.5 724v10M543.5 724v3M542.5 724v2M541.5 724v1M579.5 719v11M578.5 719v2M577.5 720v1M576.5 720v1M617.5 718v6" stroke="#808080" stroke-width="1" fill="none"/><use href="#b7" transform="matrix(1 0.00113 0 0.879 0 711.73)" stroke="#ffff00" stroke-width="1.0"/><path d="M872.5 717v3M910.5 718v11M909.5 718v2M908.5 718v1M907.5 718v1M945.5 720v23M946.5 720v13M944.5 721v3M943.5 721v2M942.5 721v1M983.5 718v29M984.5 718v17M982.5 718v3M981.5 718v2M980.5 718v1M1018.5 720v20M1019.5 720v12M1017.5 720v3M1016.5 719v2M1015.5 719v1M1056.5 728v10M1055.5 728v2M1054.5 727v1M1053.5 727v1M1090.5 724v3" stroke="#ffff00" stroke-width="1" fill="none"/><use href="#b4" transform="matrix(1 0.00086 0 0.635 0 778.70)" stroke="#8b0000" stroke-width="1.0"/><path d="M872.5 782v2M911.5 783v8M945.5 785v15M946.5 785v9M944.5 785v2M943.5 786v1M942.5 786v1M984.5 783v20M985.5 783v12M983.5 783v3M982.5 783v2M981.5 783v1M1018.5 785v15M1019.5 785v9M1017.5 784v2M1016.5 784v1M1015.5 784v1M1056.5 790v8M1091.5 787v2" stroke="#8b0000" stroke-width="1" fill="none"/><use href="#b3" transform="matrix(1 0.00027 0 0.651 0 766.56)" stroke="#00ffff" stroke-width="1.0"/><use href="#b1" transform="matrix(1 0.00080 0 0.582 0 769.67)" stroke="#0000ff" stroke-width="1.0"/><use href="#b4" transform="matrix(1 0.00141 0 0.716 0 760.64)" stroke="#006400" stroke-width="1.0"/><use href="#b0" transform="matrix(1 0.00196 0 0.815 0 733.77)" stroke="#ffc0cb" stroke-width="1.0"/><path d="M471.5 734v12M470.5 734v2M469.5 734v1M468.5 734v1M505.5 733v11M504.5 732v2M503.5 732v1M502.5 732v1M544.5 736v4" stroke="#ffc0cb" stroke-width="1" fill="none"/><use href="#b7" transform="matrix(1 -0.00043 0 0.598 0 802.65)" stroke="#808080" stroke-width="1.0"/><path d="M837.5 804v4M871.5 805v9M870.5 805v2M869.5 805v1M868.5 805v1M910.5 806v15M911.5 806v9M909.5 806v2M908.5 806v1M907.5 806v1M944.5 808v22M945.5 808v13M943.5 808v3M942.5 808v2M941.5 808v1M982.5 806v17M983.5 806v10M981.5 806v3M980.5 806v2M979.5 805v1M1017.5 807v10M1016.5 807v2M1015.5 806v1M1014.5 806v1M1055.5 812v3" stroke="#808080" stroke-width="1" fill="none"/><use href="#b3" transform="matrix(1 0.00157 0 0.800 0 662.19)" stroke="#ffa500" stroke-width="1.25"/><path d="M764.5 661v3M800.5 661v7M838.5 667v20M839.5 667v12M837.5 666v3M836.5 665v2M835.5 665v1M873.5 667v9M872.5 667v2M871.5 667v1M870.5 667v1" stroke="#ffa500" stroke-width="1" fill="none"/><use href="#b4" transform="matrix(1 0.00084 0 0.860 0 557.67)" stroke="#ff00ff" stroke-width="1.25"/><path d="M1053.5 573v3M1090.5 569v3M1126.5 563v9M1125.5 563v2M1124.5 563v1M1123.5 563v1M1164.5 568v32M1163.5 568v3M1162.5 568v2M1161.5 568v1M1199.5 569v41M1200.5 569v24M1198.5 569v3M1197.5 569v2M1196.5 569v1M1236.5 569v35M1235.5 569v3M1234.5 569v2M1233.5 569v1M1272.5 566v10M1271.5 566v2M1270.5 566v1M1269.5 566v1M1311.5 566v3" stroke="#ff00ff" stroke-width="1" fill="none"/><use href="#b1" transform="matrix(1 0.00069 0 0.587 0 790.16)" stroke="#ffa500" stroke-width="1.0"/><use href="#b3" transform="matrix(1 0.00098 0 0.715 0 734.68)" stroke="#ffc0cb" stroke-width="1.0"/><use href="#b3" transform="matrix(1 0.00084 0 0.622 0 783.78)" stroke="#006400" stroke-width="1.0"/><use href="#b3" transform="matrix(1 0.00104 0 0.815 0 697.30)" stroke="#ffff00" stroke-width="1.0"/><path d="M1057.5 712v9M1056.5 712v2M1055.5 712v1M1054.5 712v1M1092.5 708v19M1093.5 708v11M1091.5 708v3M1090.5 709v2M1089.5 709v1M1130.5 703v32M1131.5 703v19M1129.5 703v3M1128.5 703v2M1127.5 703v1M1165.5 708v26M1166.5 708v15M1164.5 708v3M1163.5 708v2M1162.5 707v1M1203.5 708v18M1204.5 708v10M1202.5 708v3M1201.5 708v2M1200.5 708v1M1237.5 708v6" stroke="#ffff00" stroke-width="1" fill="none"/><use href="#b5" transform="matrix(1 0.00084 0 0.750 0 740.53)" stroke="#ffa500" stroke-width="1.0"/><path d="M874.5 745v4M913.5 746v10M912.5 746v2M911.5 746v1M910.5 746v1M947.5 747v10M946.5 747v2M945.5 748v1M944.5 748v1M986.5 746v12M985.5 746v2M984.5 746v1M983.5 746v1M1020.5 748v6" stroke="#ffa500" stroke-width="1" fill="none"/><use href="#b3" transform="matrix(1 0.00040 0 0.743 0 744.13)" stroke="#ff0000" stroke-width="1.0"/><path d="M1058.5 757v6M1092.5 753v11M1091.5 754v2M1090.5 754v1M1089.5 754v1M1131.5 749v20M1132.5 749v12M1130.5 749v3M1129.5 749v2M1128.5 749v1M1165.5 753v24M1166.5 753v14M1164.5 753v3M1163.5 753v2M1162.5 753v1M1204.5 753v16M1205.5 753v9M1203.5 753v3M1202.5 753v2M1201.5 753v1M1238.5 753v12M1237.5 753v2M1236.5 753v1M1235.5 753v1M1277.5 751v4" stroke="#ff0000" stroke-width="1" fill="none"/><use href="#b6" transform="matrix(1 0.00055 0 0.731 0 744.78)" stroke="#ff0000" stroke-width="1.0"/><use href="#b5" transform="matrix(1 0.00168 0 0.680 0 737.38)" stroke="#ffa500" stroke-width="1.0"/><path d="M911.5 743v8M945.5 745v15M946.5 745v9M944.5 745v2M943.5 746v1M942.5 746v1M984.5 743v32M985.5 743v19M983.5 743v3M982.5 743v2M981.5 743v1M1018.5 745v27M1019.5 745v16M1017.5 744v3M1016.5 744v2M1015.5 744v1M1056.5 751v19M1057.5 751v11M1055.5 751v3M1054.5 750v2M1053.5 750v1M1091.5 748v14M1092.5 748v8M1090.5 748v2M1089.5 748v1M1088.5 748v1M1129.5 743v4" stroke="#ffa500" stroke-width="1" fill="none"/><use href="#b1" transform="matrix(1 0.00100 0 0.810 0 741.12)" stroke="#ff0000" stroke-width="1.0"/><use href="#b1" transform="matrix(1 0.00181 0 0.720 0 751.75)" stroke="#ffa500" stroke-width="1.0"/><use href="#b0" transform="matrix(1 0.00194 0 0.716 0 737.75)" stroke="#ff0000" stroke-width="1.0"/><path d="M472.5 738v11M471.5 738v2M470.5 738v1M469.5 738v1M506.5 737v29M507.5 737v17M505.5 737v3M504.5 737v2M503.5 737v1M545.5 740v35M546.5 740v21M544.5 740v3M543.5 740v2M542.5 740v1M579.5 736v28M580.5 736v16M578.5 736v3M577.5 736v2M576.5 736v1M617.5 735v16M618.5 735v9M616.5 734v3M615.5 734v2M614.5 734v1M652.5 738v3" stroke="#ff0000" stroke-width="1" fill="none"/><use href="#b5" transform="matrix(1 0.00037 0 0.694 0 751.60)" stroke="#ff0000" stroke-width="1.0"/><path d="M508.5 750v5M546.5 753v11M545.5 753v2M544.5 753v1M543.5 753v1M581.5 749v17M582.5 749v10M580.5 749v3M579.5 749v2M578.5 749v1M619.5 748v15M620.5 748v9M618.5 748v2M617.5 748v1M616.5 747v1M654.5 751v9M653.5 751v2M652.5 750v1M651.5 750v1M692.5 750v2" stroke="#ff0000" stroke-width="1" fill="none"/><use href="#b4" transform="matrix(1 0.00128 0 0.637 0 754.37)" stroke="#ffa500" stroke-width="1.0"/><path d="M474.5 754v14M475.5 754v8M473.5 754v2M472.5 754v1M471.5 754v1M508.5 753v11M507.5 753v2M506.5 753v1M505.5 753v1M547.5 756v5M581.5 752v2" stroke="#ffa500" stroke-width="1" fill="none"/><use href="#b7" transform="matrix(1 0.00171 0 0.754 0 746.02)" stroke="#ff0000" stroke-width="1.0"/><use href="#b3" transform="matrix(1 0.00147 0 0.652 0 748.06)" stroke="#ff0000" stroke-width="1.0"/><path d="M985.5 753v4M1019.5 755v10M1018.5 755v2M1017.5 755v1M1016.5 754v1M1058.5 761v13M1059.5 761v7M1057.5 761v2M1056.5 761v1M1055.5 761v1M1092.5 757v16M1093.5 757v9M1091.5 758v3M1090.5 758v2M1089.5 758v1M1131.5 753v9M1130.5 753v2M1129.5 753v1M1128.5 753v1M1165.5 757v4" stroke="#ff0000" stroke-width="1" fill="none"/><use href="#b3" transform="matrix(1 0.00149 0 0.737 0 743.62)" stroke="#ffa500" stroke-width="1.0"/><path d="M619.5 741v7M653.5 743v18M654.5 743v10M652.5 743v3M651.5 743v2M650.5 743v1M692.5 743v29M693.5 743v17M691.5 743v3M690.5 743v2M689.5 743v1M726.5 741v32M727.5 741v19M725.5 741v3M724.5 741v2M723.5 741v1M765.5 743v30M766.5 743v18M764.5 743v3M763.5 743v2M762.5 743v1M799.5 742v20M800.5 742v12M798.5 741v3M797.5 741v2M796.5 741v1M837.5 747v7" stroke="#ffa500" stroke-width="1" fill="none"/><use href="#b4" transform="matrix(1 0.00146 0 0.734 0 737.81)" stroke="#ffa500" stroke-width="1.0"/><use href="#b0" transform="matrix(1 0.00070 0 0.764 0 748.77)" stroke="#ff0000" stroke-width="1.0"/><path d="M798.5 746v4M837.5 752v13M838.5 752v7M836.5 751v2M835.5 750v1M834.5 750v1M871.5 753v27M872.5 753v16M870.5 753v3M869.5 753v2M868.5 753v1M910.5 754v38M911.5 754v22M909.5 754v3M908.5 754v2M907.5 754v1M944.5 757v19M945.5 757v11M943.5 757v3M942.5 757v2M941.5 757v1M982.5 754v7" stroke="#ff0000" stroke-width="1" fill="none"/><use href="#b2" transform="matrix(1 0.00097 0 0.678 0 750.78)" stroke="#ffa500" stroke-width="1.0"/><path d="M838.5 755v-2M873.5 755v-9M872.5 755v-2M871.5 755v-1M870.5 755v-1M911.5 756v-14M912.5 756v-8M910.5 756v-2M909.5 756v-1M908.5 756v-1M946.5 757v-21M947.5 757v-12M945.5 758v-3M944.5 758v-2M943.5 758v-1M984.5 756v-26M985.5 756v-15M983.5 756v-3M982.5 756v-2M981.5 756v-1M1019.5 758v-17M1020.5 758v-10M1018.5 757v-3M1017.5 757v-2M1016.5 757v-1M1057.5 763v-10M1056.5 763v-2M1055.5 763v-1M1054.5 763v-1M1092.5 760v-2" stroke="#ffa500" stroke-width="1" fill="none"/><use href="#b5" transform="matrix(1 0.00145 0 0.752 0 755.19)" stroke="#ffa500" stroke-width="1.0"/><path d="M473.5 755v38M474.5 755v22M472.5 755v3M471.5 755v2M470.5 755v1M508.5 754v30M509.5 754v18M507.5 754v3M506.5 754v2M505.5 754v1M546.5 757v21M547.5 757v12M545.5 757v3M544.5 757v2M543.5 757v1M581.5 753v8" stroke="#ffa500" stroke-width="1" fill="none"/><use href="#b4" transform="matrix(1 0.00192 0 0.747 0 744.85)" stroke="#000000" stroke-width="1.0"/><use href="#b4" transform="matrix(1 -0.00028 0 0.564 0 805.63)" stroke="#ffff00" stroke-width="1.0"/><use href="#b6" transform="matrix(1 -0.00026 0 0.568 0 805.52)" stroke="#00ff00" stroke-width="1.0"/><path d="M872.5 770v4M910.5 771v9M909.5 772v2M908.5 772v1M907.5 772v1M944.5 774v18M945.5 774v10M943.5 774v3M942.5 774v2M941.5 774v1M983.5 771v25M984.5 771v15M982.5 771v3M981.5 771v2M980.5 771v1M1017.5 773v19M1018.5 773v11M1016.5 772v3M1015.5 772v2M1014.5 772v1M1056.5 779v12M1055.5 779v2M1054.5 779v1M1053.5 779v1M1090.5 776v7" stroke="#006400" stroke-width="1" fill="none"/><path d="M1273.5 722v3M1307.5 721v8M1346.5 719v14M1347.5 719v8M1345.5 719v2M1344.5 720v1M1343.5 720v1" stroke="#0000ff" stroke-width="1" fill="none"/><path d="M765.5 795v7M800.5 795v14M801.5 795v8M799.5 794v2M798.5 794v1M797.5 793v1M838.5 799v22M839.5 799v13M837.5 798v3M836.5 798v2M835.5 797v1M872.5 799v21M873.5 799v12M871.5 799v3M870.5 799v2M869.5 799v1M911.5 800v13M912.5 800v7M910.5 800v2M909.5 800v1M908.5 800v1M945.5 801v7" stroke="#0000ff" stroke-width="1" fill="none"/><path d="M1275.5 801v4M1309.5 801v8M1348.5 798v16M1347.5 799v3M1346.5 799v2M1345.5 799v1" stroke="#006400" stroke-width="1" fill="none"/><path d="M1058.5 787v3M1093.5 784v10M1092.5 784v2M1091.5 784v1M1090.5 784v1M1131.5 780v21M1132.5 780v12M1130.5 780v3M1129.5 780v2M1128.5 780v1M1166.5 784v30M1167.5 784v18M1165.5 784v3M1164.5 784v2M1163.5 783v1M1204.5 784v33M1205.5 784v19M1203.5 784v3M1202.5 784v2M1201.5 784v1M1238.5 784v18M1239.5 784v10M1237.5 784v3M1236.5 784v2M1235.5 784v1M1277.5 782v5" stroke="#00ff00" stroke-width="1" fill="none"/><path d="M475.5 776v23M476.5 776v13M474.5 776v3M473.5 777v2M472.5 777v1M510.5 776v30M511.5 776v18M509.5 776v3M508.5 776v2M507.5 776v1M548.5 778v19M549.5 778v11M547.5 778v3M546.5 778v2M545.5 778v1M583.5 774v7" stroke="#ff00ff" stroke-width="1" fill="none"/><path d="M655.5 772v4M694.5 772v18M695.5 772v10M693.5 772v3M692.5 772v2M691.5 772v1M728.5 771v31M729.5 771v18M727.5 771v3M726.5 770v2M725.5 770v1M767.5 772v27M768.5 772v16M766.5 772v3M765.5 772v2M764.5 772v1M801.5 772v20M802.5 772v12M800.5 772v3M799.5 771v2M798.5 770v1M840.5 777v7" stroke="#000000" stroke-width="1" fill="none"/><path d="M1274.5 797v7M1308.5 797v22M1309.5 797v13M1307.5 797v3M1306.5 797v2M1305.5 797v1M1347.5 795v35M1348.5 795v21M1346.5 796v3M1345.5 796v2M1344.5 796v1" stroke="#8b0000" stroke-width="1" fill="none"/><path d="M506.5 706v3M544.5 709v12M543.5 709v2M542.5 709v1M541.5 709v1M579.5 705v21M580.5 705v12M578.5 705v3M577.5 705v2M576.5 706v1M617.5 704v20M618.5 704v12M616.5 704v3M615.5 703v2M614.5 703v1M652.5 707v7" stroke="#ffff00" stroke-width="1" fill="none"/><path d="M472.5 703v4M507.5 701v14M508.5 701v8M506.5 701v2M505.5 701v1M504.5 701v1M545.5 705v23M546.5 705v13M544.5 704v3M543.5 704v2M542.5 704v1M580.5 700v24M581.5 700v14M579.5 700v3M578.5 700v2M577.5 700v1M618.5 699v15M619.5 699v9M617.5 699v2M616.5 698v1M615.5 698v1M653.5 702v11M652.5 702v2M651.5 702v1M650.5 702v1M691.5 702v3" stroke="#ffa500" stroke-width="1" fill="none"/><path d="M509.5 788v3M547.5 791v12M546.5 791v2M545.5 791v1M544.5 791v1M581.5 787v22M582.5 787v13M580.5 787v3M579.5 787v2M578.5 787v1M620.5 787v32M621.5 787v19M619.5 787v3M618.5 787v2M617.5 786v1M654.5 789v26M655.5 789v15M653.5 789v3M652.5 789v2M651.5 789v1M693.5 788v25M694.5 788v15M692.5 789v3M691.5 789v2M690.5 789v1M727.5 787v9M726.5 787v2M725.5 787v1M724.5 787v1M766.5 789v3" stroke="#0000ff" stroke-width="1" fill="none"/><path d="M947.5 730v4M985.5 729v14M986.5 729v8M984.5 729v2M983.5 729v1M982.5 729v1M1020.5 731v24M1021.5 731v14M1019.5 731v3M1018.5 731v2M1017.5 730v1M1058.5 738v29M1059.5 738v17M1057.5 738v3M1056.5 738v2M1055.5 738v1M1093.5 734v13M1094.5 734v7M1092.5 734v2M1091.5 734v1M1090.5 735v1M1131.5 729v3" stroke="#ffc0cb" stroke-width="1" fill="none"/><path d="M1089.5 795v2M1128.5 790v11M1127.5 790v2M1126.5 790v1M1125.5 790v1M1162.5 794v18M1163.5 794v10M1161.5 794v3M1160.5 794v2M1159.5 793v1M1201.5 795v36M1202.5 795v21M1200.5 795v3M1199.5 795v2M1198.5 794v1M1235.5 795v41M1236.5 795v24M1234.5 795v3M1233.5 795v2M1232.5 795v1M1274.5 792v27M1275.5 792v16M1273.5 792v3M1272.5 792v2M1271.5 792v1M1308.5 792v16M1309.5 792v9M1307.5 792v3M1306.5 792v2M1305.5 791v1M1346.5 790v4" stroke="#8b0000" stroke-width="1" fill="none"/><path d="M909.5 740v2M943.5 743v9M942.5 743v2M941.5 743v1M940.5 743v1M982.5 740v14M983.5 740v8M981.5 740v2M980.5 740v1M979.5 740v1M1016.5 741v13M1017.5 741v7M1015.5 741v2M1014.5 741v1M1013.5 740v1M1054.5 749v4" stroke="#808080" stroke-width="1" fill="none"/><path d="M837.5 786v2M871.5 787v7M910.5 788v13M911.5 788v7M909.5 788v2M908.5 788v1M907.5 788v1M944.5 790v18M945.5 790v10M943.5 790v3M942.5 790v2M941.5 790v1M982.5 788v10M981.5 788v2M980.5 788v1M979.5 788v1M1017.5 789v3" stroke="#00ffff" stroke-width="1" fill="none"/><path d="M617.5 791v6M651.5 793v13M652.5 793v7M650.5 793v2M649.5 792v1M648.5 792v1M690.5 793v31M691.5 793v18M689.5 793v3M688.5 793v2M687.5 792v1M724.5 791v35M725.5 791v21M723.5 791v3M722.5 791v2M721.5 791v1M762.5 792v35M763.5 792v21M761.5 792v3M760.5 792v2M759.5 792v1M797.5 791v23M798.5 791v13M796.5 791v3M795.5 791v2M794.5 790v1M835.5 795v13M836.5 795v7M834.5 795v2M833.5 794v1M832.5 794v1M870.5 797v4" stroke="#00ffff" stroke-width="1" fill="none"/><path d="M1166.5 785v2M1204.5 785v9M1203.5 785v2M1202.5 785v1M1201.5 785v1M1238.5 785v20M1239.5 785v12M1237.5 785v3M1236.5 785v2M1235.5 785v1M1277.5 782v22M1278.5 782v13M1276.5 782v3M1275.5 783v2M1274.5 783v1M1311.5 783v22M1312.5 783v13M1310.5 783v3M1309.5 782v2M1308.5 782v1" stroke="#0000ff" stroke-width="1" fill="none"/><path d="M471.5 733v14M472.5 733v8M470.5 733v2M469.5 734v1M468.5 734v1M506.5 732v26M507.5 732v15M505.5 732v3M504.5 732v2M503.5 732v1M544.5 735v35M545.5 735v21M543.5 735v3M542.5 735v2M541.5 735v1M579.5 731v39M580.5 731v23M578.5 731v3M577.5 731v2M576.5 731v1M617.5 730v25M618.5 730v15M616.5 730v3M615.5 729v2M614.5 729v1M651.5 733v13M652.5 733v7M650.5 732v2M649.5 732v1M648.5 732v1M690.5 733v5" stroke="#006400" stroke-width="1" fill="none"/><path d="M475.5 803v28M476.5 803v16M474.5 803v3M473.5 803v2M472.5 803v1M509.5 803v16M510.5 803v9M508.5 803v3M507.5 802v2M506.5 802v1M548.5 805v8M582.5 801v2" stroke="#8b0000" stroke-width="1" fill="none"/><path d="M619.5 801v2M654.5 802v9M653.5 802v2M652.5 802v1M651.5 802v1M692.5 802v17M693.5 802v10M691.5 802v3M690.5 802v2M689.5 802v1M727.5 801v28M728.5 801v16M726.5 801v3M725.5 801v2M724.5 801v1M765.5 802v18M766.5 802v10M764.5 802v3M763.5 802v2M762.5 802v1M800.5 802v9M799.5 802v2M798.5 801v1M797.5 801v1" stroke="#00ff00" stroke-width="1" fill="none"/><path d="M1020.5 809v5M1058.5 813v12M1057.5 813v2M1056.5 813v1M1055.5 813v1M1093.5 810v18M1094.5 810v10M1092.5 810v3M1091.5 811v2M1090.5 811v1M1131.5 807v15M1132.5 807v9M1130.5 807v2M1129.5 807v1M1128.5 807v1M1165.5 810v9M1164.5 810v2M1163.5 810v1M1162.5 810v1M1204.5 810v4" stroke="#ff0000" stroke-width="1" fill="none"/><path d="M473.5 777v16M474.5 777v9M472.5 777v3M471.5 777v2M470.5 778v1M507.5 776v8" stroke="#ff0000" stroke-width="1" fill="none"/><path d="M474.5 761v13M475.5 761v7M473.5 762v2M472.5 762v1M471.5 762v1M508.5 761v12M507.5 761v2M506.5 761v1M505.5 761v1M547.5 763v5" stroke="#00ffff" stroke-width="1" fill="none"/><path d="M797.5 802v3M835.5 806v13M836.5 806v7M834.5 805v2M833.5 805v1M832.5 804v1M870.5 807v31M871.5 807v18M869.5 807v3M868.5 807v2M867.5 807v1M908.5 808v45M909.5 808v27M907.5 808v3M906.5 808v2M905.5 808v1M943.5 810v29M944.5 810v17M942.5 810v3M941.5 810v2M940.5 810v1M981.5 808v8M1015.5 808v3" stroke="#000000" stroke-width="1" fill="none"/><path d="M913.5 808v7M947.5 809v20M948.5 809v12M946.5 809v3M945.5 810v2M944.5 810v1M985.5 808v35M986.5 808v21M984.5 808v3M983.5 808v2M982.5 808v1M1020.5 810v26M1021.5 810v15M1019.5 809v3M1018.5 809v2M1017.5 809v1M1058.5 814v11M1057.5 814v2M1056.5 814v1M1055.5 814v1M1093.5 811v3" stroke="#ffff00" stroke-width="1" fill="none"/><path d="M873.5 725v4M911.5 726v12M910.5 726v2M909.5 726v1M908.5 726v1M946.5 728v24M947.5 728v14M945.5 729v3M944.5 729v2M943.5 729v1M984.5 726v24M985.5 726v14M983.5 726v3M982.5 726v2M981.5 726v1M1018.5 728v29M1019.5 728v17M1017.5 728v3M1016.5 727v2M1015.5 727v1M1057.5 736v14M1058.5 736v8M1056.5 736v2M1055.5 735v1M1054.5 735v1M1091.5 732v5" stroke="#ffc0cb" stroke-width="1" fill="none"/><path d="M473.5 727v12M472.5 727v2M471.5 728v1M470.5 728v1M508.5 727v7M546.5 729v3" stroke="#00ffff" stroke-width="1" fill="none"/><path d="M473.5 753v31M474.5 753v18M472.5 753v3M471.5 754v2M470.5 754v1M508.5 753v16M509.5 753v9M507.5 752v3M506.5 752v2M505.5 752v1M546.5 755v7" stroke="#ffc0cb" stroke-width="1" fill="none"/><path d="M652.5 759v4M690.5 759v14M691.5 759v8M689.5 758v2M688.5 758v1M687.5 758v1M725.5 756v24M726.5 756v14M724.5 756v3M723.5 756v2M722.5 756v1M763.5 758v21M764.5 758v12M762.5 758v3M761.5 758v2M760.5 758v1M798.5 757v13M799.5 757v7M797.5 757v2M796.5 756v1M795.5 756v1M836.5 762v5" stroke="#00ffff" stroke-width="1" fill="none"/><path d="M799.5 732v3M837.5 738v11M836.5 737v2M835.5 737v1M834.5 736v1M872.5 739v21M873.5 739v12M871.5 739v3M870.5 739v2M869.5 739v1M910.5 741v29M911.5 741v17M909.5 741v3M908.5 741v2M907.5 741v1M945.5 743v27M946.5 743v16M944.5 743v3M943.5 744v2M942.5 744v1M983.5 741v18M984.5 741v10M982.5 740v3M981.5 740v2M980.5 740v1M1018.5 742v8" stroke="#808080" stroke-width="1" fill="none"/><path d="M946.5 796v3M985.5 795v7M1019.5 796v12M1018.5 796v2M1017.5 796v1M1016.5 796v1M1057.5 802v10M1056.5 802v2M1055.5 802v1M1054.5 802v1M1092.5 799v6" stroke="#006400" stroke-width="1" fill="none"/><path d="M874.5 721v4M913.5 722v9M912.5 722v2M911.5 722v1M910.5 722v1M947.5 723v7M985.5 722v4" stroke="#ffff00" stroke-width="1" fill="none"/><path d="M908.5 789v4M943.5 791v11M942.5 791v2M941.5 791v1M940.5 791v1M981.5 789v18M982.5 789v10M980.5 789v3M979.5 788v2M978.5 788v1M1015.5 789v33M1016.5 789v19M1014.5 789v3M1013.5 789v2M1012.5 789v1M1054.5 795v23M1055.5 795v13M1053.5 795v3M1052.5 794v2M1051.5 794v1M1088.5 793v12M1087.5 793v2M1086.5 793v1M1085.5 793v1M1127.5 789v4" stroke="#00ffff" stroke-width="1" fill="none"/><path d="M471.5 767v2M505.5 766v4M544.5 768v8M578.5 765v12M577.5 765v2M576.5 765v1M575.5 765v1M616.5 764v8M651.5 766v5" stroke="#000000" stroke-width="1" fill="none"/><path d="M985.5 771v7M1020.5 773v12M1019.5 772v2M1018.5 772v1M1017.5 772v1M1058.5 778v18M1059.5 778v10M1057.5 778v3M1056.5 778v2M1055.5 778v1M1092.5 775v16M1093.5 775v9M1091.5 775v3M1090.5 775v2M1089.5 775v1M1131.5 771v7M1165.5 775v2" stroke="#00ffff" stroke-width="1" fill="none"/><path d="M655.5 769v3M694.5 769v11M693.5 769v2M692.5 769v1M691.5 769v1M728.5 768v23M729.5 768v13M727.5 768v3M726.5 767v2M725.5 767v1M767.5 769v37M768.5 769v22M766.5 769v3M765.5 769v2M764.5 769v1M801.5 769v27M802.5 769v16M800.5 769v3M799.5 768v2M798.5 768v1M840.5 773v8M874.5 773v3" stroke="#0000ff" stroke-width="1" fill="none"/><path d="M654.5 760v5M693.5 760v20M694.5 760v12M692.5 760v3M691.5 760v2M690.5 760v1M727.5 759v42M728.5 759v25M726.5 758v3M725.5 758v2M724.5 758v1M766.5 760v35M767.5 760v21M765.5 760v3M764.5 760v2M763.5 760v1M800.5 760v13M801.5 760v7M799.5 759v2M798.5 758v1M797.5 758v1" stroke="#006400" stroke-width="1" fill="none"/><path d="M1056.5 801v5M1090.5 798v14M1091.5 798v8M1089.5 799v2M1088.5 799v1M1087.5 799v1M1129.5 794v11M1128.5 794v2M1127.5 794v1M1126.5 794v1M1163.5 798v4" stroke="#ffa500" stroke-width="1" fill="none"/><path d="M946.5 741v6M985.5 740v14M986.5 740v8M984.5 740v2M983.5 740v1M982.5 740v1M1019.5 742v19M1020.5 742v11M1018.5 741v3M1017.5 741v2M1016.5 741v1M1058.5 748v19M1059.5 748v11M1057.5 748v3M1056.5 748v2M1055.5 748v1M1092.5 744v8M1131.5 740v3" stroke="#ffc0cb" stroke-width="1" fill="none"/><path d="M505.5 782v-3M544.5 785v-8M578.5 782v-15M579.5 782v-9M577.5 782v-2M576.5 782v-1M575.5 782v-1M617.5 781v-24M618.5 781v-14M616.5 780v-3M615.5 780v-2M614.5 780v-1M651.5 783v-20M652.5 783v-12M650.5 783v-3M649.5 782v-2M648.5 782v-1M690.5 783v-13M691.5 783v-7M689.5 783v-2M688.5 783v-1M687.5 783v-1M724.5 781v-5" stroke="#006400" stroke-width="1" fill="none"/><path d="M872.5 749v4M911.5 750v11M910.5 750v2M909.5 750v1M908.5 750v1M945.5 752v27M946.5 752v16M944.5 752v3M943.5 752v2M942.5 752v1M984.5 750v42M985.5 750v25M983.5 750v3M982.5 750v2M981.5 749v1M1018.5 751v26M1019.5 751v15M1017.5 751v3M1016.5 751v2M1015.5 750v1M1057.5 758v12M1056.5 758v2M1055.5 758v1M1054.5 757v1M1091.5 754v4" stroke="#ff0000" stroke-width="1" fill="none"/><path d="M762.5 739v8M797.5 738v22M798.5 738v13M796.5 737v3M795.5 737v2M794.5 737v1M835.5 743v34M836.5 743v20M834.5 742v3M833.5 742v2M832.5 741v1M870.5 746v26M871.5 746v15M869.5 746v3M868.5 746v2M867.5 746v1M908.5 747v7" stroke="#ff0000" stroke-width="1" fill="none"/><path d="M1236.5 762v2M1274.5 760v11M1273.5 760v2M1272.5 760v1M1271.5 760v1M1309.5 760v19M1310.5 760v11M1308.5 760v3M1307.5 759v2M1306.5 759v1M1347.5 757v21M1348.5 757v12M1346.5 757v3M1345.5 758v2M1344.5 758v1" stroke="#ffa500" stroke-width="1" fill="none"/><path d="M1019.5 754v2M1057.5 761v10M1056.5 761v2M1055.5 760v1M1054.5 760v1M1091.5 757v15M1092.5 757v9M1090.5 757v2M1089.5 758v1M1088.5 758v1M1130.5 752v18M1131.5 752v10M1129.5 752v3M1128.5 752v2M1127.5 752v1M1164.5 757v11M1163.5 756v2M1162.5 756v1M1161.5 756v1M1203.5 757v3" stroke="#ff0000" stroke-width="1" fill="none"/><path d="M1128.5 743v3M1162.5 747v8M1201.5 748v16M1202.5 748v9M1200.5 748v3M1199.5 748v2M1198.5 748v1M1235.5 748v25M1236.5 748v15M1234.5 748v3M1233.5 748v2M1232.5 749v1M1274.5 746v24M1275.5 746v14M1273.5 746v3M1272.5 746v2M1271.5 746v1M1308.5 745v14M1309.5 745v8M1307.5 745v2M1306.5 745v1M1305.5 745v1M1347.5 743v7" stroke="#ffa500" stroke-width="1" fill="none"/><path d="M947.5 752v5M985.5 751v16M986.5 751v9M984.5 751v3M983.5 751v2M982.5 751v1M1020.5 753v36M1021.5 753v21M1019.5 753v3M1018.5 753v2M1017.5 753v1M1058.5 760v33M1059.5 760v19M1057.5 760v3M1056.5 759v2M1055.5 759v1M1093.5 756v24M1094.5 756v14M1092.5 756v3M1091.5 756v2M1090.5 756v1M1131.5 751v8M1165.5 756v2" stroke="#000000" stroke-width="1" fill="none"/><path d="M473.5 805v3M508.5 804v7M546.5 806v9M545.5 806v2M544.5 806v1M543.5 806v1M580.5 803v12M579.5 803v2M578.5 803v1M577.5 803v1M619.5 803v8M653.5 804v5" stroke="#ffff00" stroke-width="1" fill="none"/><path d="M982.5 809v6M1016.5 809v12M1015.5 809v2M1014.5 809v1M1013.5 809v1M1054.5 815v12M1053.5 815v2M1052.5 814v1M1051.5 814v1M1089.5 813v4" stroke="#00ff00" stroke-width="1" fill="none"/><path d="M311.5 170.5H1348.5V968.5H311.5ZM312 270.5h3m1 0h1M1348 270.5h-4M312 370.5h3m1 0h1M1348 370.5h-4M312 470.5h3m1 0h1M1348 470.5h-4M312 569.5h3m1 0h1M1348 569.5h-4M312 669.5h3m1 0h1M1348 669.5h-4M312 769.5h3m1 0h1M1348 769.5h-4M312 869.5h3m1 0h1M1348 869.5h-4M483.5 171v4M483.5 968v-4M656.5 171v4M656.5 968v-4M829.5 171v4M829.5 968v-4M1002.5 171v4M1002.5 968v-4M1175.5 171v4M1175.5 968v-4" stroke="#000" stroke-width="1" fill="none"/><g font-family="Liberation Mono, monospace" font-size="13.85" fill="#000" stroke="#000" stroke-width="0.22" shape-rendering="auto" text-rendering="geometricPrecision"><text x="305" y="173.9" text-anchor="end">1.5e+05</text><text x="305" y="273.9" text-anchor="end">1.25e+05</text><text x="305" y="373.9" text-anchor="end">1e+05</text><text x="305" y="473.9" text-anchor="end">7.5e+04</text><text x="305" y="572.9" text-anchor="end">5e+04</text><text x="305" y="672.9" text-anchor="end">2.5e+04</text><text x="305" y="772.9" text-anchor="end">0</text><text x="305" y="872.9" text-anchor="end">−2.5e+04</text><text x="305" y="971.9" text-anchor="end">−5e+04</text><text x="311.5" y="984" text-anchor="middle">4.412e+06</text><text x="483.5" y="984" text-anchor="middle">4.415e+06</text><text x="656.5" y="984" text-anchor="middle">4.418e+06</text><text x="829.5" y="984" text-anchor="middle">4.42e+06</text><text x="1002.5" y="984" text-anchor="middle">4.422e+06</text><text x="1175.5" y="984" text-anchor="middle">4.425e+06</text><text x="1348.5" y="984" text-anchor="middle">4.428e+06</text><text x="320.5" y="184.2">RF_didq (Hz)</text><text x="1337.5" y="965" text-anchor="end">sample (sample)</text></g></svg><div class="abs" style="left:435px;top:1014px;width:20px;height:170px;background:#ffff66"></div><div class="abs" style="left:435px;top:1075.2px;width:20px;text-align:center;font-size:10.5px;font-weight:bold;line-height:12px">T<br>O<br>U<br>S</div><svg class="abs" style="left:0;top:0" width="1384" height="1228" viewBox="40 25 1384 1228"><g shape-rendering="crispEdges"><rect x="496" y="1039" width="10" height="11" fill="#ff0000"/><rect x="558" y="1039" width="10" height="11" fill="#0000ff"/><rect x="620" y="1039" width="10" height="11" fill="#006400"/><rect x="682" y="1039" width="10" height="11" fill="#ff00ff"/><rect x="744" y="1039" width="10" height="11" fill="#00ffff"/><rect x="806" y="1039" width="10" height="11" fill="#00ff00"/><rect x="867" y="1039" width="10" height="11" fill="#ffff00"/><rect x="929" y="1039" width="10" height="11" fill="#8b0000"/><rect x="991" y="1039" width="10" height="11" fill="#808080"/><rect x="1053" y="1039" width="10" height="11" fill="#000000"/><rect x="1115" y="1039" width="10" height="11" fill="#ffc0cb"/><rect x="1177" y="1039" width="10" height="11" fill="#ffa500"/><rect x="496" y="1051" width="10" height="11" fill="#ff0000"/><rect x="558" y="1051" width="10" height="11" fill="#0000ff"/><rect x="620" y="1051" width="10" height="11" fill="#006400"/><rect x="682" y="1051" width="10" height="11" fill="#ff00ff"/><rect x="744" y="1051" width="10" height="11" fill="#00ffff"/><rect x="806" y="1051" width="10" height="11" fill="#00ff00"/><rect x="867" y="1051" width="10" height="11" fill="#ffff00"/><rect x="929" y="1051" width="10" height="11" fill="#8b0000"/><rect x="991" y="1051" width="10" height="11" fill="#808080"/><rect x="1053" y="1051" width="10" height="11" fill="#000000"/><rect x="1115" y="1051" width="10" height="11" fill="#ffc0cb"/><rect x="1177" y="1051" width="10" height="11" fill="#ffa500"/><rect x="496" y="1063" width="10" height="11" fill="#ff0000"/><rect x="558" y="1063" width="10" height="11" fill="#0000ff"/><rect x="620" y="1063" width="10" height="11" fill="#006400"/><rect x="682" y="1063" width="10" height="11" fill="#ff00ff"/><rect x="744" y="1063" width="10" height="11" fill="#00ffff"/><rect x="806" y="1063" width="10" height="11" fill="#00ff00"/><rect x="867" y="1063" width="10" height="11" fill="#ffff00"/><rect x="929" y="1063" width="10" height="11" fill="#8b0000"/><rect x="991" y="1063" width="10" height="11" fill="#808080"/><rect x="1053" y="1063" width="10" height="11" fill="#000000"/><rect x="1115" y="1063" width="10" height="11" fill="#ffc0cb"/><rect x="1177" y="1063" width="10" height="11" fill="#ffa500"/><rect x="496" y="1075" width="10" height="11" fill="#ff0000"/><rect x="558" y="1075" width="10" height="11" fill="#0000ff"/><rect x="620" y="1075" width="10" height="11" fill="#006400"/><rect x="682" y="1075" width="10" height="11" fill="#ff00ff"/><rect x="744" y="1075" width="10" height="11" fill="#00ffff"/><rect x="806" y="1075" width="10" height="11" fill="#00ff00"/><rect x="867" y="1075" width="10" height="11" fill="#ffff00"/><rect x="929" y="1075" width="10" height="11" fill="#8b0000"/><rect x="991" y="1075" width="10" height="11" fill="#808080"/><rect x="1053" y="1075" width="10" height="11" fill="#000000"/><rect x="1115" y="1075" width="10" height="11" fill="#ffc0cb"/><rect x="1177" y="1075" width="10" height="11" fill="#ffa500"/><rect x="496" y="1087" width="10" height="11" fill="#ff0000"/><rect x="558" y="1087" width="10" height="11" fill="#0000ff"/><rect x="620" y="1087" width="10" height="11" fill="#006400"/><rect x="682" y="1087" width="10" height="11" fill="#ff00ff"/><rect x="744" y="1087" width="10" height="11" fill="#00ffff"/><rect x="806" y="1087" width="10" height="11" fill="#00ff00"/><rect x="867" y="1087" width="10" height="11" fill="#ffff00"/><rect x="929" y="1087" width="10" height="11" fill="#8b0000"/><rect x="991" y="1087" width="10" height="11" fill="#808080"/><rect x="1053" y="1087" width="10" height="11" fill="#000000"/><rect x="1115" y="1087" width="10" height="11" fill="#ffc0cb"/><rect x="1177" y="1087" width="10" height="11" fill="#ffa500"/><rect x="496" y="1099" width="10" height="11" fill="#ff0000"/><rect x="558" y="1099" width="10" height="11" fill="#0000ff"/><rect x="620" y="1099" width="10" height="11" fill="#006400"/><rect x="682" y="1099" width="10" height="11" fill="#ff00ff"/><rect x="744" y="1099" width="10" height="11" fill="#00ffff"/><rect x="806" y="1099" width="10" height="11" fill="#00ff00"/><rect x="867" y="1099" width="10" height="11" fill="#ffff00"/><rect x="929" y="1099" width="10" height="11" fill="#8b0000"/><rect x="991" y="1099" width="10" height="11" fill="#808080"/><rect x="1053" y="1099" width="10" height="11" fill="#000000"/><rect x="1115" y="1099" width="10" height="11" fill="#ffc0cb"/><rect x="1177" y="1099" width="10" height="11" fill="#ffa500"/><rect x="496" y="1111" width="10" height="11" fill="#ff0000"/><rect x="558" y="1111" width="10" height="11" fill="#0000ff"/><rect x="620" y="1111" width="10" height="11" fill="#006400"/><rect x="682" y="1111" width="10" height="11" fill="#ff00ff"/><rect x="744" y="1111" width="10" height="11" fill="#00ffff"/><rect x="806" y="1111" width="10" height="11" fill="#00ff00"/><rect x="867" y="1111" width="10" height="11" fill="#ffff00"/><rect x="929" y="1111" width="10" height="11" fill="#8b0000"/><rect x="991" y="1111" width="10" height="11" fill="#808080"/><rect x="1053" y="1111" width="10" height="11" fill="#000000"/><rect x="1115" y="1111" width="10" height="11" fill="#ffc0cb"/><rect x="1177" y="1111" width="10" height="11" fill="#ffa500"/><rect x="496" y="1123" width="10" height="11" fill="#ff0000"/><rect x="558" y="1123" width="10" height="11" fill="#0000ff"/><rect x="620" y="1123" width="10" height="11" fill="#006400"/><rect x="682" y="1123" width="10" height="11" fill="#ff00ff"/><rect x="744" y="1123" width="10" height="11" fill="#00ffff"/><rect x="806" y="1123" width="10" height="11" fill="#00ff00"/><rect x="867" y="1123" width="10" height="11" fill="#ffff00"/><rect x="929" y="1123" width="10" height="11" fill="#8b0000"/><rect x="991" y="1123" width="10" height="11" fill="#808080"/><rect x="1053" y="1123" width="10" height="11" fill="#000000"/><rect x="1115" y="1123" width="10" height="11" fill="#ffc0cb"/><rect x="1177" y="1123" width="10" height="11" fill="#ffa500"/><rect x="496" y="1135" width="10" height="11" fill="#ff0000"/><rect x="558" y="1135" width="10" height="11" fill="#0000ff"/><rect x="620" y="1135" width="10" height="11" fill="#006400"/><rect x="682" y="1135" width="10" height="11" fill="#ff00ff"/><rect x="744" y="1135" width="10" height="11" fill="#00ffff"/><rect x="806" y="1135" width="10" height="11" fill="#00ff00"/><rect x="867" y="1135" width="10" height="11" fill="#ffff00"/><rect x="929" y="1135" width="10" height="11" fill="#8b0000"/><rect x="991" y="1135" width="10" height="11" fill="#808080"/><rect x="1053" y="1135" width="10" height="11" fill="#000000"/><rect x="1115" y="1135" width="10" height="11" fill="#ffc0cb"/><rect x="1177" y="1135" width="10" height="11" fill="#ffa500"/><rect x="496" y="1147" width="10" height="11" fill="#ff0000"/><rect x="558" y="1147" width="10" height="11" fill="#0000ff"/><rect x="620" y="1147" width="10" height="11" fill="#006400"/><rect x="682" y="1147" width="10" height="11" fill="#ff00ff"/><rect x="744" y="1147" width="10" height="11" fill="#00ffff"/><rect x="806" y="1147" width="10" height="11" fill="#00ff00"/><rect x="867" y="1147" width="10" height="11" fill="#ffff00"/><rect x="929" y="1147" width="10" height="11" fill="#8b0000"/><rect x="991" y="1147" width="10" height="11" fill="#808080"/><rect x="1053" y="1147" width="10" height="11" fill="#000000"/><rect x="1115" y="1147" width="10" height="11" fill="#ffc0cb"/><rect x="1177" y="1147" width="10" height="11" fill="#ffa500"/><rect x="496" y="1159" width="10" height="11" fill="#ff0000"/><rect x="558" y="1159" width="10" height="11" fill="#0000ff"/><rect x="620" y="1159" width="10" height="11" fill="#006400"/><rect x="682" y="1159" width="10" height="11" fill="#ff00ff"/><rect x="744" y="1159" width="10" height="11" fill="#00ffff"/><rect x="806" y="1159" width="10" height="11" fill="#00ff00"/><rect x="867" y="1159" width="10" height="11" fill="#ffff00"/><rect x="929" y="1159" width="10" height="11" fill="#8b0000"/><rect x="991" y="1159" width="10" height="11" fill="#808080"/><rect x="1053" y="1159" width="10" height="11" fill="#000000"/><rect x="1115" y="1159" width="10" height="11" fill="#ffc0cb"/><rect x="1177" y="1159" width="10" height="11" fill="#ffa500"/><rect x="496" y="1171" width="10" height="11" fill="#ff0000"/><rect x="558" y="1171" width="10" height="11" fill="#0000ff"/><rect x="620" y="1171" width="10" height="11" fill="#006400"/><rect x="682" y="1171" width="10" height="11" fill="#ff00ff"/><rect x="744" y="1171" width="10" height="11" fill="#00ffff"/><rect x="806" y="1171" width="10" height="11" fill="#00ff00"/><rect x="867" y="1171" width="10" height="11" fill="#ffff00"/><rect x="929" y="1171" width="10" height="11" fill="#8b0000"/><rect x="991" y="1171" width="10" height="11" fill="#808080"/><rect x="1053" y="1171" width="10" height="11" fill="#000000"/><rect x="1115" y="1171" width="10" height="11" fill="#ffc0cb"/><rect x="1177" y="1171" width="10" height="11" fill="#ffa500"/></g><g font-family="Liberation Sans, sans-serif" font-size="10" fill="#000"><text x="512" y="1048.9" textLength="28.5" lengthAdjust="spacingAndGlyphs">KA000</text><text x="574" y="1048.9" textLength="28.5" lengthAdjust="spacingAndGlyphs">KA001</text><text x="636" y="1048.9" textLength="28.5" lengthAdjust="spacingAndGlyphs">KA002</text><text x="698" y="1048.9" textLength="28.5" lengthAdjust="spacingAndGlyphs">KA003</text><text x="760" y="1048.9" textLength="28.5" lengthAdjust="spacingAndGlyphs">KA004</text><text x="822" y="1048.9" textLength="28.5" lengthAdjust="spacingAndGlyphs">KA005</text><text x="883" y="1048.9" textLength="28.5" lengthAdjust="spacingAndGlyphs">KA006</text><text x="945" y="1048.9" textLength="28.5" lengthAdjust="spacingAndGlyphs">KA007</text><text x="1007" y="1048.9" textLength="28.5" lengthAdjust="spacingAndGlyphs">KA008</text><text x="1069" y="1048.9" textLength="28.5" lengthAdjust="spacingAndGlyphs">KA009</text><text x="1131" y="1048.9" textLength="28.5" lengthAdjust="spacingAndGlyphs">KA010</text><text x="1193" y="1048.9" textLength="28.5" lengthAdjust="spacingAndGlyphs">KA011</text><text x="512" y="1060.9" textLength="28.5" lengthAdjust="spacingAndGlyphs">KA012</text><text x="574" y="1060.9" textLength="28.5" lengthAdjust="spacingAndGlyphs">KA013</text><text x="636" y="1060.9" textLength="28.5" lengthAdjust="spacingAndGlyphs">KA014</text><text x="698" y="1060.9" textLength="28.5" lengthAdjust="spacingAndGlyphs">KA015</text><text x="760" y="1060.9" textLength="28.5" lengthAdjust="spacingAndGlyphs">KA016</text><text x="822" y="1060.9" textLength="28.5" lengthAdjust="spacingAndGlyphs">KA017</text><text x="883" y="1060.9" textLength="28.5" lengthAdjust="spacingAndGlyphs">KA018</text><text x="945" y="1060.9" textLength="28.5" lengthAdjust="spacingAndGlyphs">KA019</text><text x="1007" y="1060.9" textLength="28.5" lengthAdjust="spacingAndGlyphs">KA020</text><text x="1069" y="1060.9" textLength="28.5" lengthAdjust="spacingAndGlyphs">KA021</text><text x="1131" y="1060.9" textLength="28.5" lengthAdjust="spacingAndGlyphs">KA022</text><text x="1193" y="1060.9" textLength="28.5" lengthAdjust="spacingAndGlyphs">KA023</text><text x="512" y="1072.9" textLength="28.5" lengthAdjust="spacingAndGlyphs">KA024</text><text x="574" y="1072.9" textLength="28.5" lengthAdjust="spacingAndGlyphs">KA025</text><text x="636" y="1072.9" textLength="28.5" lengthAdjust="spacingAndGlyphs">KA026</text><text x="698" y="1072.9" textLength="28.5" lengthAdjust="spacingAndGlyphs">KA027</text><text x="760" y="1072.9" textLength="28.5" lengthAdjust="spacingAndGlyphs">KA028</text><text x="822" y="1072.9" textLength="28.5" lengthAdjust="spacingAndGlyphs">KA029</text><text x="883" y="1072.9" textLength="28.5" lengthAdjust="spacingAndGlyphs">KA030</text><text x="945" y="1072.9" textLength="28.5" lengthAdjust="spacingAndGlyphs">KA031</text><text x="1007" y="1072.9" textLength="28.5" lengthAdjust="spacingAndGlyphs">KA032</text><text x="1069" y="1072.9" textLength="28.5" lengthAdjust="spacingAndGlyphs">KA033</text><text x="1131" y="1072.9" textLength="28.5" lengthAdjust="spacingAndGlyphs">KA034</text><text x="1193" y="1072.9" textLength="28.5" lengthAdjust="spacingAndGlyphs">KA035</text><text x="512" y="1084.9" textLength="28.5" lengthAdjust="spacingAndGlyphs">KA036</text><text x="574" y="1084.9" textLength="28.5" lengthAdjust="spacingAndGlyphs">KA037</text><text x="636" y="1084.9" textLength="28.5" lengthAdjust="spacingAndGlyphs">KA038</text><text x="698" y="1084.9" textLength="28.5" lengthAdjust="spacingAndGlyphs">KA039</text><text x="760" y="1084.9" textLength="28.5" lengthAdjust="spacingAndGlyphs">KA040</text><text x="822" y="1084.9" textLength="28.5" lengthAdjust="spacingAndGlyphs">KA041</text><text x="883" y="1084.9" textLength="28.5" lengthAdjust="spacingAndGlyphs">KA042</text><text x="945" y="1084.9" textLength="28.5" lengthAdjust="spacingAndGlyphs">KA043</text><text x="1007" y="1084.9" textLength="28.5" lengthAdjust="spacingAndGlyphs">KA044</text><text x="1069" y="1084.9" textLength="28.5" lengthAdjust="spacingAndGlyphs">KA045</text><text x="1131" y="1084.9" textLength="28.5" lengthAdjust="spacingAndGlyphs">KA046</text><text x="1193" y="1084.9" textLength="28.5" lengthAdjust="spacingAndGlyphs">KA047</text><text x="512" y="1096.9" textLength="28.5" lengthAdjust="spacingAndGlyphs">KA048</text><text x="574" y="1096.9" textLength="28.5" lengthAdjust="spacingAndGlyphs">KA049</text><text x="636" y="1096.9" textLength="28.5" lengthAdjust="spacingAndGlyphs">KA050</text><text x="698" y="1096.9" textLength="28.5" lengthAdjust="spacingAndGlyphs">KA051</text><text x="760" y="1096.9" textLength="28.5" lengthAdjust="spacingAndGlyphs">KA052</text><text x="822" y="1096.9" textLength="28.5" lengthAdjust="spacingAndGlyphs">KA053</text><text x="883" y="1096.9" textLength="28.5" lengthAdjust="spacingAndGlyphs">KA054</text><text x="945" y="1096.9" textLength="28.5" lengthAdjust="spacingAndGlyphs">KA055</text><text x="1007" y="1096.9" textLength="28.5" lengthAdjust="spacingAndGlyphs">KA056</text><text x="1069" y="1096.9" textLength="28.5" lengthAdjust="spacingAndGlyphs">KA057</text><text x="1131" y="1096.9" textLength="28.5" lengthAdjust="spacingAndGlyphs">KA058</text><text x="1193" y="1096.9" textLength="28.5" lengthAdjust="spacingAndGlyphs">KA059</text><text x="512" y="1108.9" textLength="28.5" lengthAdjust="spacingAndGlyphs">KA060</text><text x="574" y="1108.9" textLength="28.5" lengthAdjust="spacingAndGlyphs">KA061</text><text x="636" y="1108.9" textLength="28.5" lengthAdjust="spacingAndGlyphs">KA062</text><text x="698" y="1108.9" textLength="28.5" lengthAdjust="spacingAndGlyphs">KA063</text><text x="760" y="1108.9" textLength="28.5" lengthAdjust="spacingAndGlyphs">KA064</text><text x="822" y="1108.9" textLength="28.5" lengthAdjust="spacingAndGlyphs">KA065</text><text x="883" y="1108.9" textLength="28.5" lengthAdjust="spacingAndGlyphs">KA066</text><text x="945" y="1108.9" textLength="28.5" lengthAdjust="spacingAndGlyphs">KA067</text><text x="1007" y="1108.9" textLength="28.5" lengthAdjust="spacingAndGlyphs">KA068</text><text x="1069" y="1108.9" textLength="28.5" lengthAdjust="spacingAndGlyphs">KA069</text><text x="1131" y="1108.9" textLength="28.5" lengthAdjust="spacingAndGlyphs">KA070</text><text x="1193" y="1108.9" textLength="28.5" lengthAdjust="spacingAndGlyphs">KA071</text><text x="512" y="1120.9" textLength="28.5" lengthAdjust="spacingAndGlyphs">KA072</text><text x="574" y="1120.9" textLength="28.5" lengthAdjust="spacingAndGlyphs">KA073</text><text x="636" y="1120.9" textLength="28.5" lengthAdjust="spacingAndGlyphs">KA074</text><text x="698" y="1120.9" textLength="28.5" lengthAdjust="spacingAndGlyphs">KA075</text><text x="760" y="1120.9" textLength="28.5" lengthAdjust="spacingAndGlyphs">KA076</text><text x="822" y="1120.9" textLength="28.5" lengthAdjust="spacingAndGlyphs">KA077</text><text x="883" y="1120.9" textLength="28.5" lengthAdjust="spacingAndGlyphs">KA078</text><text x="945" y="1120.9" textLength="28.5" lengthAdjust="spacingAndGlyphs">KA079</text><text x="1007" y="1120.9" textLength="28.5" lengthAdjust="spacingAndGlyphs">KA080</text><text x="1069" y="1120.9" textLength="28.5" lengthAdjust="spacingAndGlyphs">KA081</text><text x="1131" y="1120.9" textLength="28.5" lengthAdjust="spacingAndGlyphs">KA082</text><text x="1193" y="1120.9" textLength="28.5" lengthAdjust="spacingAndGlyphs">KA083</text><text x="512" y="1132.9" textLength="28.5" lengthAdjust="spacingAndGlyphs">KA084</text><text x="574" y="1132.9" textLength="28.5" lengthAdjust="spacingAndGlyphs">KA085</text><text x="636" y="1132.9" textLength="28.5" lengthAdjust="spacingAndGlyphs">KA086</text><text x="698" y="1132.9" textLength="28.5" lengthAdjust="spacingAndGlyphs">KA087</text><text x="760" y="1132.9" textLength="28.5" lengthAdjust="spacingAndGlyphs">KA088</text><text x="822" y="1132.9" textLength="28.5" lengthAdjust="spacingAndGlyphs">KA089</text><text x="883" y="1132.9" textLength="28.5" lengthAdjust="spacingAndGlyphs">KA090</text><text x="945" y="1132.9" textLength="28.5" lengthAdjust="spacingAndGlyphs">KA091</text><text x="1007" y="1132.9" textLength="28.5" lengthAdjust="spacingAndGlyphs">KA092</text><text x="1069" y="1132.9" textLength="28.5" lengthAdjust="spacingAndGlyphs">KA093</text><text x="1131" y="1132.9" textLength="28.5" lengthAdjust="spacingAndGlyphs">KA094</text><text x="1193" y="1132.9" textLength="28.5" lengthAdjust="spacingAndGlyphs">KA095</text><text x="512" y="1144.9" textLength="28.5" lengthAdjust="spacingAndGlyphs">KA096</text><text x="574" y="1144.9" textLength="28.5" lengthAdjust="spacingAndGlyphs">KA097</text><text x="636" y="1144.9" textLength="28.5" lengthAdjust="spacingAndGlyphs">KA098</text><text x="698" y="1144.9" textLength="28.5" lengthAdjust="spacingAndGlyphs">KA099</text><text x="760" y="1144.9" textLength="28.5" lengthAdjust="spacingAndGlyphs">KA100</text><text x="822" y="1144.9" textLength="28.5" lengthAdjust="spacingAndGlyphs">KA101</text><text x="883" y="1144.9" textLength="28.5" lengthAdjust="spacingAndGlyphs">KA102</text><text x="945" y="1144.9" textLength="28.5" lengthAdjust="spacingAndGlyphs">KA103</text><text x="1007" y="1144.9" textLength="28.5" lengthAdjust="spacingAndGlyphs">KA104</text><text x="1069" y="1144.9" textLength="28.5" lengthAdjust="spacingAndGlyphs">KA105</text><text x="1131" y="1144.9" textLength="28.5" lengthAdjust="spacingAndGlyphs">KA106</text><text x="1193" y="1144.9" textLength="28.5" lengthAdjust="spacingAndGlyphs">KA107</text><text x="512" y="1156.9" textLength="28.5" lengthAdjust="spacingAndGlyphs">KA108</text><text x="574" y="1156.9" textLength="28.5" lengthAdjust="spacingAndGlyphs">KA109</text><text x="636" y="1156.9" textLength="28.5" lengthAdjust="spacingAndGlyphs">KA110</text><text x="698" y="1156.9" textLength="28.5" lengthAdjust="spacingAndGlyphs">KA111</text><text x="760" y="1156.9" textLength="28.5" lengthAdjust="spacingAndGlyphs">KA112</text><text x="822" y="1156.9" textLength="28.5" lengthAdjust="spacingAndGlyphs">KA113</text><text x="883" y="1156.9" textLength="28.5" lengthAdjust="spacingAndGlyphs">KA114</text><text x="945" y="1156.9" textLength="28.5" lengthAdjust="spacingAndGlyphs">KA115</text><text x="1007" y="1156.9" textLength="28.5" lengthAdjust="spacingAndGlyphs">KA116</text><text x="1069" y="1156.9" textLength="28.5" lengthAdjust="spacingAndGlyphs">KA117</text><text x="1131" y="1156.9" textLength="28.5" lengthAdjust="spacingAndGlyphs">KA118</text><text x="1193" y="1156.9" textLength="28.5" lengthAdjust="spacingAndGlyphs">KA119</text><text x="512" y="1168.9" textLength="28.5" lengthAdjust="spacingAndGlyphs">KA120</text><text x="574" y="1168.9" textLength="28.5" lengthAdjust="spacingAndGlyphs">KA121</text><text x="636" y="1168.9" textLength="28.5" lengthAdjust="spacingAndGlyphs">KA122</text><text x="698" y="1168.9" textLength="28.5" lengthAdjust="spacingAndGlyphs">KA123</text><text x="760" y="1168.9" textLength="28.5" lengthAdjust="spacingAndGlyphs">KA124</text><text x="822" y="1168.9" textLength="28.5" lengthAdjust="spacingAndGlyphs">KA125</text><text x="883" y="1168.9" textLength="28.5" lengthAdjust="spacingAndGlyphs">KA126</text><text x="945" y="1168.9" textLength="28.5" lengthAdjust="spacingAndGlyphs">KA127</text><text x="1007" y="1168.9" textLength="28.5" lengthAdjust="spacingAndGlyphs">KA128</text><text x="1069" y="1168.9" textLength="28.5" lengthAdjust="spacingAndGlyphs">KA129</text><text x="1131" y="1168.9" textLength="28.5" lengthAdjust="spacingAndGlyphs">KA130</text><text x="1193" y="1168.9" textLength="28.5" lengthAdjust="spacingAndGlyphs">KA131</text><text x="512" y="1180.9" textLength="28.5" lengthAdjust="spacingAndGlyphs">KA132</text><text x="574" y="1180.9" textLength="28.5" lengthAdjust="spacingAndGlyphs">KA133</text><text x="636" y="1180.9" textLength="28.5" lengthAdjust="spacingAndGlyphs">KA134</text><text x="698" y="1180.9" textLength="28.5" lengthAdjust="spacingAndGlyphs">KA135</text><text x="760" y="1180.9" textLength="28.5" lengthAdjust="spacingAndGlyphs">KA136</text><text x="822" y="1180.9" textLength="28.5" lengthAdjust="spacingAndGlyphs">KA137</text><text x="883" y="1180.9" textLength="28.5" lengthAdjust="spacingAndGlyphs">KA138</text><text x="945" y="1180.9" textLength="28.5" lengthAdjust="spacingAndGlyphs">KA139</text><text x="1007" y="1180.9" textLength="28.5" lengthAdjust="spacingAndGlyphs">KA140</text><text x="1069" y="1180.9" textLength="28.5" lengthAdjust="spacingAndGlyphs">KA141</text><text x="1131" y="1180.9" textLength="28.5" lengthAdjust="spacingAndGlyphs">KA142</text><text x="1193" y="1180.9" textLength="28.5" lengthAdjust="spacingAndGlyphs">KA143</text></g></svg><div class="abs pill" style="left:375px;top:1056px;width:54px"></div><div class="abs pill" style="left:375px;top:1118px;width:54px"></div><div class="abs t" style="left:390.40px;top:1058.52px;font-size:13.5px;letter-spacing:0.473px;font-weight:normal;">flag</div><div class="abs t" style="left:394.70px;top:1120.92px;font-size:13.5px;letter-spacing:0.242px;font-weight:normal;">all</div><div class="abs" style="left:201px;top:1184px;width:1178px;height:2px;border-top:1px solid #8e8a60;border-bottom:1px solid #ececec"></div><div class="abs" style="left:201px;top:1190px;width:120px;height:25px;background:#ffff66"></div><div class="abs t" style="left:211.70px;top:1195.02px;font-size:13.5px;letter-spacing:0.335px;font-weight:normal;">Nouveau fichier</div><div class="abs" style="left:321px;top:1191px;width:896px;height:22px;background:#fff;border:1px solid #e6e6e6;border-top-color:#d2d2d2"></div><div class="abs cb" style="left:1217px;top:1193px;width:104px;height:20px"><span class="cap" style="width:21px"></span></div><div class="abs" style="left:1322px;top:1191px;width:23px;height:23px;background:#fff;border:1px solid #000"></div><div class="abs" style="left:1339px;top:1193px;width:40px;height:23px;background:#f3f3f3;border:1px solid #a4a4a4"></div><div class="abs t" style="left:1346.90px;top:1196.84px;font-size:12px;letter-spacing:-1.008px;font-weight:normal;">MES</div><svg class="abs" style="left:1369px;top:1213px" width="15" height="15"><path d="M14 2L2 14M14 6L6 14M14 10L10 14" stroke="#8a8568" stroke-width="1"/></svg></div></body></html>
